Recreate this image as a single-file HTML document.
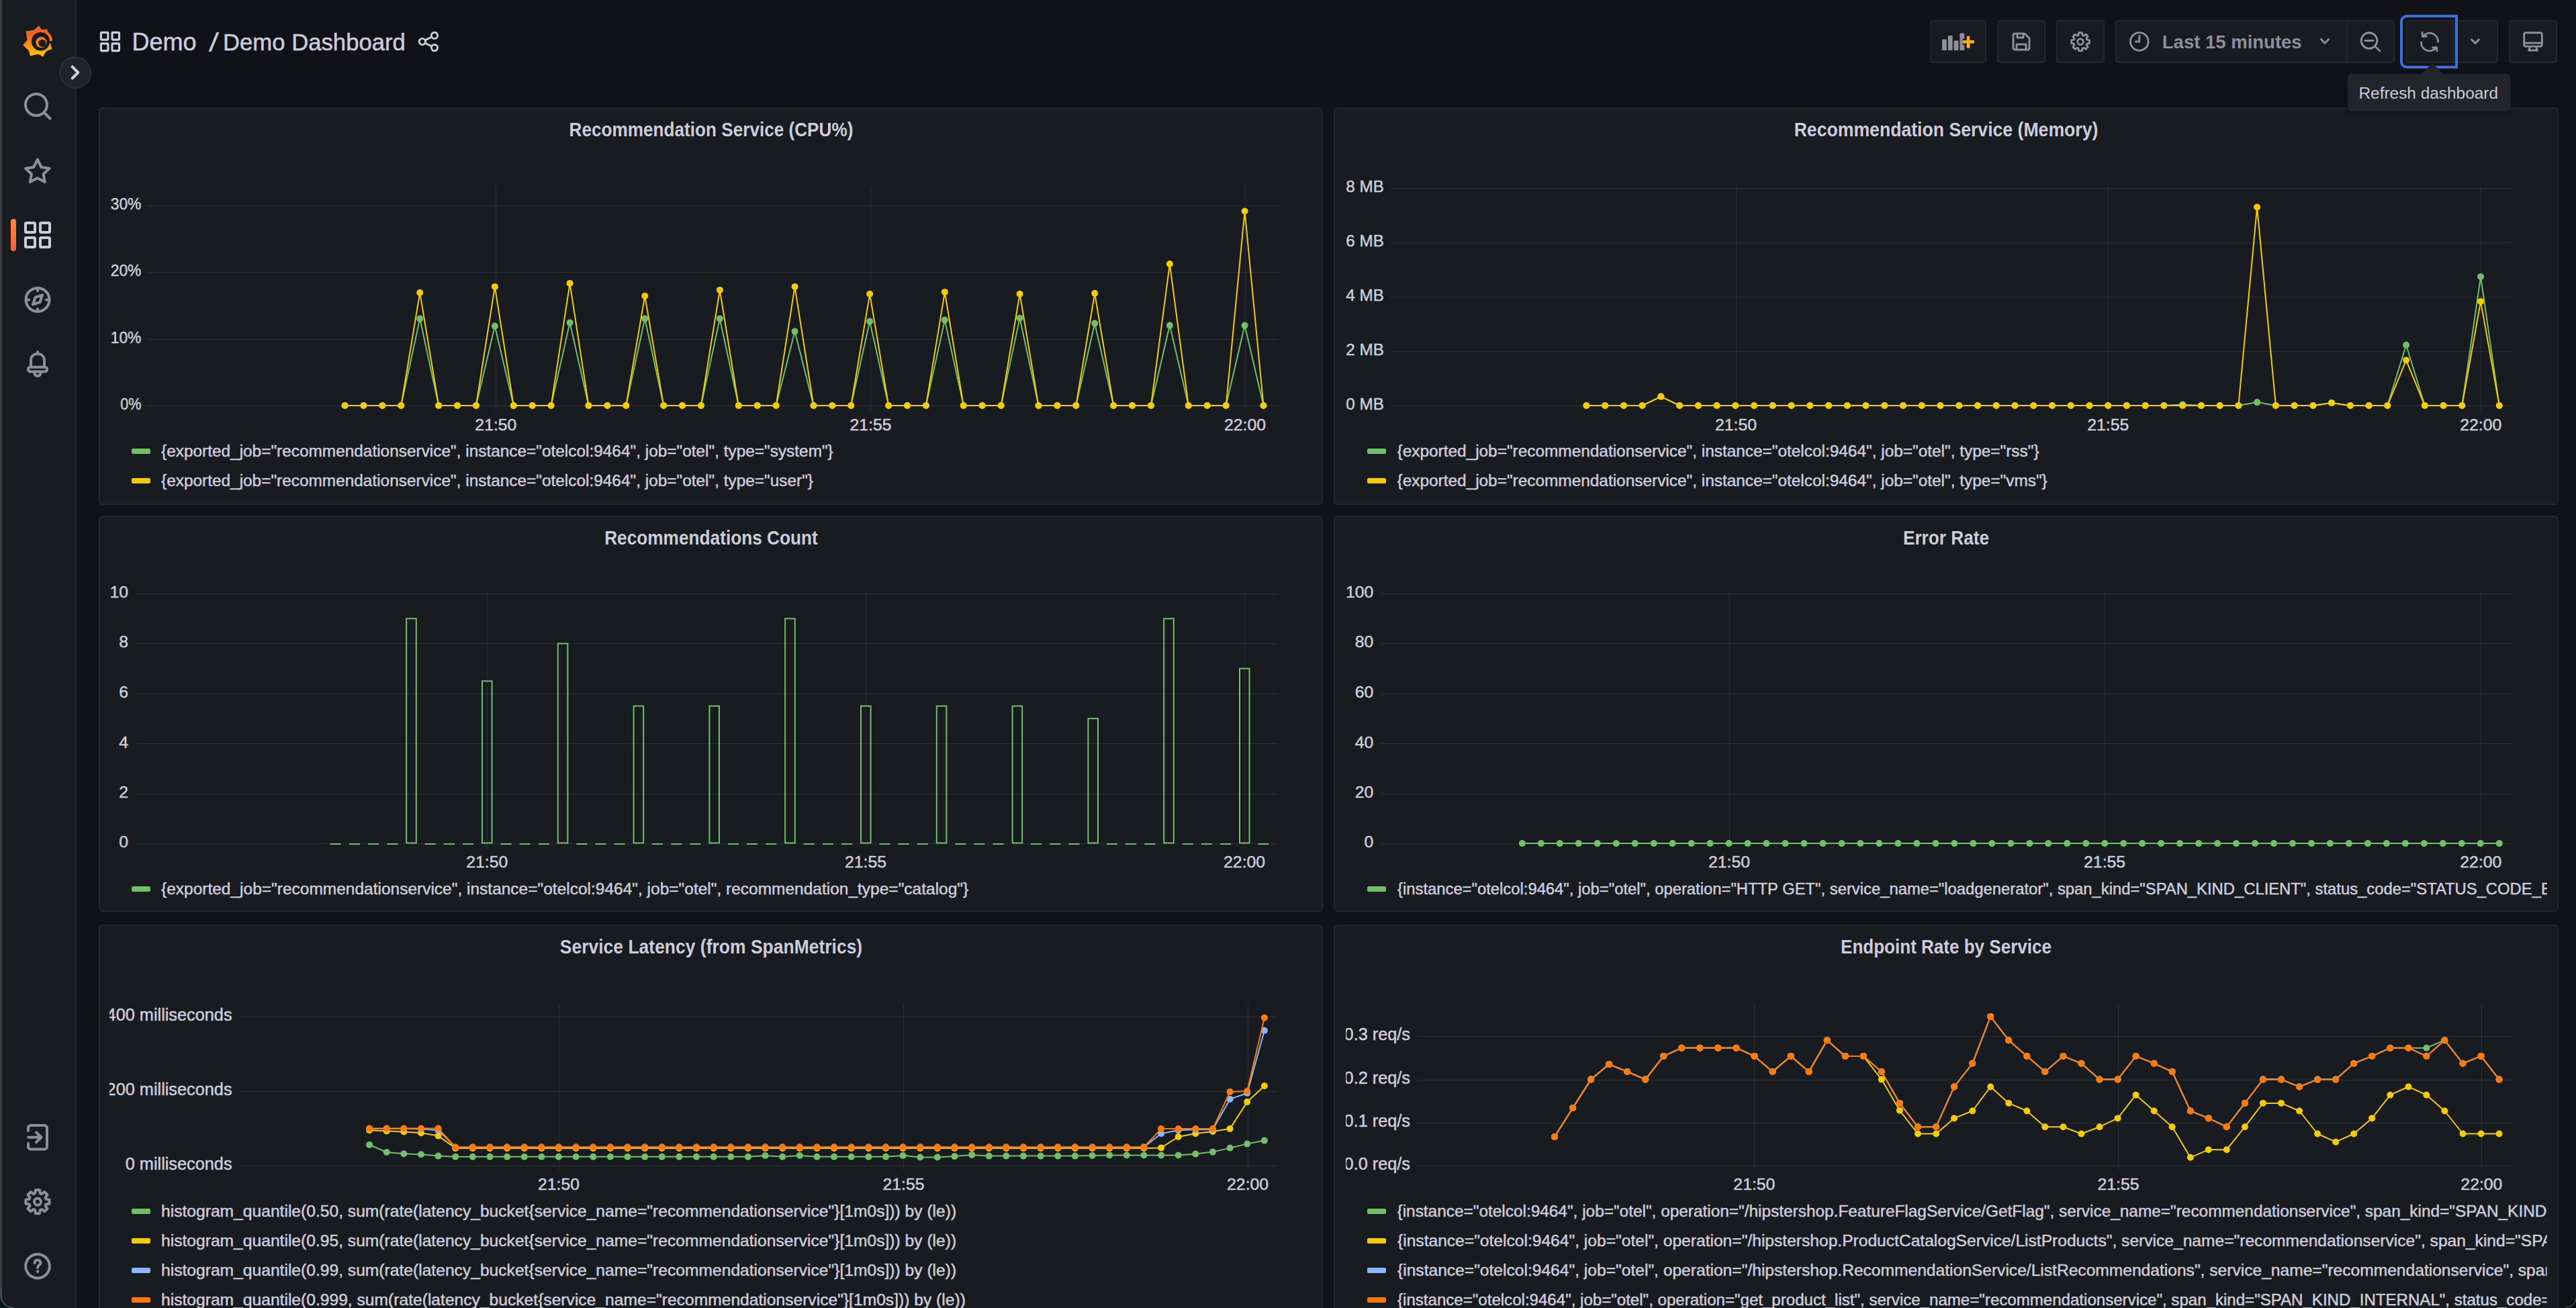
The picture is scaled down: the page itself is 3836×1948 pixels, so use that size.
<!DOCTYPE html>
<html><head><meta charset="utf-8"><style>
html,body{margin:0;padding:0}
body{width:3836px;height:1948px;background:#111217;position:relative;overflow:hidden;font-family:'Liberation Sans', sans-serif}
.pn{position:absolute;box-sizing:border-box;background:#181b1f;border:2px solid #25272c;border-radius:6px}
.tt{position:absolute;width:1200px;text-align:center;font-weight:bold;font-size:29.6px;line-height:32px;color:#ccccdc;white-space:nowrap}
.ax{font-size:24.8px;fill:#ccccdc;font-family:'Liberation Sans', sans-serif;stroke:#ccccdc;stroke-width:0.5px}
.g{stroke:rgba(240,250,255,0.088);stroke-width:1;shape-rendering:crispEdges}
.lm{position:absolute;width:28px;height:8px;border-radius:2px}
.lt{position:absolute;font-size:24.4px;line-height:30px;color:#ccccdc;white-space:nowrap;overflow:hidden;-webkit-text-stroke:0.5px #ccccdc}
</style></head><body>
<div style="position:absolute;left:0;top:0;width:112px;height:1948px;background:#181b1f;border-right:2px solid #25272c;box-sizing:content-box"></div>
<div style="position:absolute;left:0;top:0;width:2.5px;height:1948px;background:#3a3b3f"></div>
<div style="position:absolute;left:196.4px;top:41px;font-size:36px;line-height:44px;color:#ccccdc;white-space:nowrap;-webkit-text-stroke:0.5px #ccccdc">Demo</div>
<div style="position:absolute;left:312.5px;top:41px;font-size:38px;line-height:44px;color:#ccccdc;white-space:nowrap;transform:skewX(-8deg);-webkit-text-stroke:0.8px #ccccdc">/</div>
<div style="position:absolute;left:332px;top:41px;font-size:34.7px;line-height:44px;color:#ccccdc;white-space:nowrap;-webkit-text-stroke:0.5px #ccccdc">Demo Dashboard</div>
<div class="pn" style="left:147px;top:160px;width:1823px;height:592px"></div><div class="tt" style="left:458.5px;top:177.1px;transform:scaleX(0.8835)">Recommendation Service (CPU%)</div><div class="pn" style="left:1986px;top:160px;width:1823.5px;height:592px"></div><div class="tt" style="left:2297.8px;top:177.1px;transform:scaleX(0.8996)">Recommendation Service (Memory)</div><div class="pn" style="left:147px;top:768px;width:1823px;height:590px"></div><div class="tt" style="left:458.5px;top:785.1px;transform:scaleX(0.8864)">Recommendations Count</div><div class="pn" style="left:1986px;top:768px;width:1823.5px;height:590px"></div><div class="tt" style="left:2297.8px;top:785.1px;transform:scaleX(0.8854)">Error Rate</div><div class="pn" style="left:147px;top:1376.5px;width:1823px;height:700px"></div><div class="tt" style="left:458.5px;top:1393.6px;transform:scaleX(0.8949)">Service Latency (from SpanMetrics)</div><div class="pn" style="left:1986px;top:1376.5px;width:1823.5px;height:700px"></div><div class="tt" style="left:2297.8px;top:1393.6px;transform:scaleX(0.8797)">Endpoint Rate by Service</div>
<svg style="position:absolute;left:0;top:0" width="3836" height="1948" viewBox="0 0 3836 1948">
<defs><clipPath id="c5"><rect x="163" y="1480" width="400" height="300"/></clipPath></defs>
<text x="210.4" y="311.8" text-anchor="end" class="ax" transform="translate(210.4,0) scale(0.92,1) translate(-210.4,0)">30%</text><text x="210.4" y="410.8" text-anchor="end" class="ax" transform="translate(210.4,0) scale(0.92,1) translate(-210.4,0)">20%</text><text x="210.4" y="510.8" text-anchor="end" class="ax" transform="translate(210.4,0) scale(0.92,1) translate(-210.4,0)">10%</text><text x="210.4" y="609.8" text-anchor="end" class="ax" transform="translate(210.4,0) scale(0.87,1) translate(-210.4,0)">0%</text><line x1="220" y1="306.5" x2="1902.5" y2="306.5" class="g"/><line x1="220" y1="405.5" x2="1902.5" y2="405.5" class="g"/><line x1="220" y1="505.5" x2="1902.5" y2="505.5" class="g"/><line x1="220" y1="604.5" x2="1902.5" y2="604.5" class="g"/><line x1="738.5" y1="277" x2="738.5" y2="612" class="g"/><line x1="1296.5" y1="277" x2="1296.5" y2="612" class="g"/><line x1="1854.5" y1="277" x2="1854.5" y2="612" class="g"/><text x="738.4" y="640.5" text-anchor="middle" class="ax">21:50</text><text x="1296.6" y="640.5" text-anchor="middle" class="ax">21:55</text><text x="1854" y="640.5" text-anchor="middle" class="ax">22:00</text><polyline points="513.6,604 541.5,604 569.4,604 597.3,604 625.3,474.6 653.2,604 681.1,604 709,604 736.9,485.6 764.8,604 792.8,604 820.7,604 848.6,480.6 876.5,604 904.4,604 932.3,604 960.3,474.6 988.2,604 1016.1,604 1044,604 1071.9,474.6 1099.8,604 1127.8,604 1155.7,604 1183.6,493.6 1211.5,604 1239.4,604 1267.3,604 1295.2,478.6 1323.2,604 1351.1,604 1379,604 1406.9,476.6 1434.8,604 1462.7,604 1490.7,604 1518.6,473.7 1546.5,604 1574.4,604 1602.3,604 1630.2,481.6 1658.2,604 1686.1,604 1714,604 1741.9,484.6 1769.8,604 1797.7,604 1825.7,604 1853.6,484.6 1881.5,604" fill="none" stroke="#73BF69" stroke-width="2" stroke-linejoin="round"/><circle cx="513.6" cy="604" r="5" fill="#73BF69"/><circle cx="541.5" cy="604" r="5" fill="#73BF69"/><circle cx="569.4" cy="604" r="5" fill="#73BF69"/><circle cx="597.3" cy="604" r="5" fill="#73BF69"/><circle cx="625.3" cy="474.6" r="5" fill="#73BF69"/><circle cx="653.2" cy="604" r="5" fill="#73BF69"/><circle cx="681.1" cy="604" r="5" fill="#73BF69"/><circle cx="709" cy="604" r="5" fill="#73BF69"/><circle cx="736.9" cy="485.6" r="5" fill="#73BF69"/><circle cx="764.8" cy="604" r="5" fill="#73BF69"/><circle cx="792.8" cy="604" r="5" fill="#73BF69"/><circle cx="820.7" cy="604" r="5" fill="#73BF69"/><circle cx="848.6" cy="480.6" r="5" fill="#73BF69"/><circle cx="876.5" cy="604" r="5" fill="#73BF69"/><circle cx="904.4" cy="604" r="5" fill="#73BF69"/><circle cx="932.3" cy="604" r="5" fill="#73BF69"/><circle cx="960.3" cy="474.6" r="5" fill="#73BF69"/><circle cx="988.2" cy="604" r="5" fill="#73BF69"/><circle cx="1016.1" cy="604" r="5" fill="#73BF69"/><circle cx="1044" cy="604" r="5" fill="#73BF69"/><circle cx="1071.9" cy="474.6" r="5" fill="#73BF69"/><circle cx="1099.8" cy="604" r="5" fill="#73BF69"/><circle cx="1127.8" cy="604" r="5" fill="#73BF69"/><circle cx="1155.7" cy="604" r="5" fill="#73BF69"/><circle cx="1183.6" cy="493.6" r="5" fill="#73BF69"/><circle cx="1211.5" cy="604" r="5" fill="#73BF69"/><circle cx="1239.4" cy="604" r="5" fill="#73BF69"/><circle cx="1267.3" cy="604" r="5" fill="#73BF69"/><circle cx="1295.2" cy="478.6" r="5" fill="#73BF69"/><circle cx="1323.2" cy="604" r="5" fill="#73BF69"/><circle cx="1351.1" cy="604" r="5" fill="#73BF69"/><circle cx="1379" cy="604" r="5" fill="#73BF69"/><circle cx="1406.9" cy="476.6" r="5" fill="#73BF69"/><circle cx="1434.8" cy="604" r="5" fill="#73BF69"/><circle cx="1462.7" cy="604" r="5" fill="#73BF69"/><circle cx="1490.7" cy="604" r="5" fill="#73BF69"/><circle cx="1518.6" cy="473.7" r="5" fill="#73BF69"/><circle cx="1546.5" cy="604" r="5" fill="#73BF69"/><circle cx="1574.4" cy="604" r="5" fill="#73BF69"/><circle cx="1602.3" cy="604" r="5" fill="#73BF69"/><circle cx="1630.2" cy="481.6" r="5" fill="#73BF69"/><circle cx="1658.2" cy="604" r="5" fill="#73BF69"/><circle cx="1686.1" cy="604" r="5" fill="#73BF69"/><circle cx="1714" cy="604" r="5" fill="#73BF69"/><circle cx="1741.9" cy="484.6" r="5" fill="#73BF69"/><circle cx="1769.8" cy="604" r="5" fill="#73BF69"/><circle cx="1797.7" cy="604" r="5" fill="#73BF69"/><circle cx="1825.7" cy="604" r="5" fill="#73BF69"/><circle cx="1853.6" cy="484.6" r="5" fill="#73BF69"/><circle cx="1881.5" cy="604" r="5" fill="#73BF69"/><polyline points="513.6,604 541.5,604 569.4,604 597.3,604 625.3,435.8 653.2,604 681.1,604 709,604 736.9,426.9 764.8,604 792.8,604 820.7,604 848.6,421.9 876.5,604 904.4,604 932.3,604 960.3,440.8 988.2,604 1016.1,604 1044,604 1071.9,431.9 1099.8,604 1127.8,604 1155.7,604 1183.6,426.9 1211.5,604 1239.4,604 1267.3,604 1295.2,437.8 1323.2,604 1351.1,604 1379,604 1406.9,434.9 1434.8,604 1462.7,604 1490.7,604 1518.6,437.8 1546.5,604 1574.4,604 1602.3,604 1630.2,436.8 1658.2,604 1686.1,604 1714,604 1741.9,393.1 1769.8,604 1797.7,604 1825.7,604 1853.6,314.5 1881.5,604" fill="none" stroke="#F2CC0C" stroke-width="2" stroke-linejoin="round"/><circle cx="513.6" cy="604" r="5" fill="#F2CC0C"/><circle cx="541.5" cy="604" r="5" fill="#F2CC0C"/><circle cx="569.4" cy="604" r="5" fill="#F2CC0C"/><circle cx="597.3" cy="604" r="5" fill="#F2CC0C"/><circle cx="625.3" cy="435.8" r="5" fill="#F2CC0C"/><circle cx="653.2" cy="604" r="5" fill="#F2CC0C"/><circle cx="681.1" cy="604" r="5" fill="#F2CC0C"/><circle cx="709" cy="604" r="5" fill="#F2CC0C"/><circle cx="736.9" cy="426.9" r="5" fill="#F2CC0C"/><circle cx="764.8" cy="604" r="5" fill="#F2CC0C"/><circle cx="792.8" cy="604" r="5" fill="#F2CC0C"/><circle cx="820.7" cy="604" r="5" fill="#F2CC0C"/><circle cx="848.6" cy="421.9" r="5" fill="#F2CC0C"/><circle cx="876.5" cy="604" r="5" fill="#F2CC0C"/><circle cx="904.4" cy="604" r="5" fill="#F2CC0C"/><circle cx="932.3" cy="604" r="5" fill="#F2CC0C"/><circle cx="960.3" cy="440.8" r="5" fill="#F2CC0C"/><circle cx="988.2" cy="604" r="5" fill="#F2CC0C"/><circle cx="1016.1" cy="604" r="5" fill="#F2CC0C"/><circle cx="1044" cy="604" r="5" fill="#F2CC0C"/><circle cx="1071.9" cy="431.9" r="5" fill="#F2CC0C"/><circle cx="1099.8" cy="604" r="5" fill="#F2CC0C"/><circle cx="1127.8" cy="604" r="5" fill="#F2CC0C"/><circle cx="1155.7" cy="604" r="5" fill="#F2CC0C"/><circle cx="1183.6" cy="426.9" r="5" fill="#F2CC0C"/><circle cx="1211.5" cy="604" r="5" fill="#F2CC0C"/><circle cx="1239.4" cy="604" r="5" fill="#F2CC0C"/><circle cx="1267.3" cy="604" r="5" fill="#F2CC0C"/><circle cx="1295.2" cy="437.8" r="5" fill="#F2CC0C"/><circle cx="1323.2" cy="604" r="5" fill="#F2CC0C"/><circle cx="1351.1" cy="604" r="5" fill="#F2CC0C"/><circle cx="1379" cy="604" r="5" fill="#F2CC0C"/><circle cx="1406.9" cy="434.9" r="5" fill="#F2CC0C"/><circle cx="1434.8" cy="604" r="5" fill="#F2CC0C"/><circle cx="1462.7" cy="604" r="5" fill="#F2CC0C"/><circle cx="1490.7" cy="604" r="5" fill="#F2CC0C"/><circle cx="1518.6" cy="437.8" r="5" fill="#F2CC0C"/><circle cx="1546.5" cy="604" r="5" fill="#F2CC0C"/><circle cx="1574.4" cy="604" r="5" fill="#F2CC0C"/><circle cx="1602.3" cy="604" r="5" fill="#F2CC0C"/><circle cx="1630.2" cy="436.8" r="5" fill="#F2CC0C"/><circle cx="1658.2" cy="604" r="5" fill="#F2CC0C"/><circle cx="1686.1" cy="604" r="5" fill="#F2CC0C"/><circle cx="1714" cy="604" r="5" fill="#F2CC0C"/><circle cx="1741.9" cy="393.1" r="5" fill="#F2CC0C"/><circle cx="1769.8" cy="604" r="5" fill="#F2CC0C"/><circle cx="1797.7" cy="604" r="5" fill="#F2CC0C"/><circle cx="1825.7" cy="604" r="5" fill="#F2CC0C"/><circle cx="1853.6" cy="314.5" r="5" fill="#F2CC0C"/><circle cx="1881.5" cy="604" r="5" fill="#F2CC0C"/><text x="2060.8" y="285.8" text-anchor="end" class="ax" transform="translate(2060.8,0) scale(0.975,1) translate(-2060.8,0)">8 MB</text><text x="2060.8" y="366.8" text-anchor="end" class="ax" transform="translate(2060.8,0) scale(0.975,1) translate(-2060.8,0)">6 MB</text><text x="2060.8" y="447.8" text-anchor="end" class="ax" transform="translate(2060.8,0) scale(0.975,1) translate(-2060.8,0)">4 MB</text><text x="2060.8" y="528.8" text-anchor="end" class="ax" transform="translate(2060.8,0) scale(0.975,1) translate(-2060.8,0)">2 MB</text><text x="2060.8" y="609.8" text-anchor="end" class="ax" transform="translate(2060.8,0) scale(0.975,1) translate(-2060.8,0)">0 MB</text><line x1="2071" y1="280.5" x2="3742" y2="280.5" class="g"/><line x1="2071" y1="361.5" x2="3742" y2="361.5" class="g"/><line x1="2071" y1="442.5" x2="3742" y2="442.5" class="g"/><line x1="2071" y1="523.5" x2="3742" y2="523.5" class="g"/><line x1="2071" y1="604.5" x2="3742" y2="604.5" class="g"/><line x1="2585.5" y1="277" x2="2585.5" y2="612" class="g"/><line x1="3139.5" y1="277" x2="3139.5" y2="612" class="g"/><line x1="3694.5" y1="277" x2="3694.5" y2="612" class="g"/><text x="2585" y="640.5" text-anchor="middle" class="ax">21:50</text><text x="3139.2" y="640.5" text-anchor="middle" class="ax">21:55</text><text x="3694.2" y="640.5" text-anchor="middle" class="ax">22:00</text><polyline points="2362.4,604 2390.1,604 2417.9,604 2445.6,604 2473.4,590.6 2501.1,604 2528.9,604 2556.6,604 2584.3,604 2612.1,604 2639.8,604 2667.6,604 2695.3,604 2723.1,604 2750.8,604 2778.5,604 2806.3,604 2834,604 2861.8,604 2889.5,604 2917.3,604 2945,604 2972.7,604 3000.5,604 3028.2,604 3056,604 3083.7,604 3111.5,604 3139.2,604 3166.9,604 3194.7,604 3222.4,604 3250.2,602.4 3277.9,604 3305.7,604 3333.4,604 3361.1,599.1 3388.9,604 3416.6,604 3444.4,604 3472.1,600 3499.9,604 3527.6,604 3555.3,604 3583.1,513.7 3610.8,604 3638.6,604 3666.3,604 3694.1,412 3721.8,604" fill="none" stroke="#73BF69" stroke-width="2" stroke-linejoin="round"/><circle cx="2362.4" cy="604" r="5" fill="#73BF69"/><circle cx="2390.1" cy="604" r="5" fill="#73BF69"/><circle cx="2417.9" cy="604" r="5" fill="#73BF69"/><circle cx="2445.6" cy="604" r="5" fill="#73BF69"/><circle cx="2473.4" cy="590.6" r="5" fill="#73BF69"/><circle cx="2501.1" cy="604" r="5" fill="#73BF69"/><circle cx="2528.9" cy="604" r="5" fill="#73BF69"/><circle cx="2556.6" cy="604" r="5" fill="#73BF69"/><circle cx="2584.3" cy="604" r="5" fill="#73BF69"/><circle cx="2612.1" cy="604" r="5" fill="#73BF69"/><circle cx="2639.8" cy="604" r="5" fill="#73BF69"/><circle cx="2667.6" cy="604" r="5" fill="#73BF69"/><circle cx="2695.3" cy="604" r="5" fill="#73BF69"/><circle cx="2723.1" cy="604" r="5" fill="#73BF69"/><circle cx="2750.8" cy="604" r="5" fill="#73BF69"/><circle cx="2778.5" cy="604" r="5" fill="#73BF69"/><circle cx="2806.3" cy="604" r="5" fill="#73BF69"/><circle cx="2834" cy="604" r="5" fill="#73BF69"/><circle cx="2861.8" cy="604" r="5" fill="#73BF69"/><circle cx="2889.5" cy="604" r="5" fill="#73BF69"/><circle cx="2917.3" cy="604" r="5" fill="#73BF69"/><circle cx="2945" cy="604" r="5" fill="#73BF69"/><circle cx="2972.7" cy="604" r="5" fill="#73BF69"/><circle cx="3000.5" cy="604" r="5" fill="#73BF69"/><circle cx="3028.2" cy="604" r="5" fill="#73BF69"/><circle cx="3056" cy="604" r="5" fill="#73BF69"/><circle cx="3083.7" cy="604" r="5" fill="#73BF69"/><circle cx="3111.5" cy="604" r="5" fill="#73BF69"/><circle cx="3139.2" cy="604" r="5" fill="#73BF69"/><circle cx="3166.9" cy="604" r="5" fill="#73BF69"/><circle cx="3194.7" cy="604" r="5" fill="#73BF69"/><circle cx="3222.4" cy="604" r="5" fill="#73BF69"/><circle cx="3250.2" cy="602.4" r="5" fill="#73BF69"/><circle cx="3277.9" cy="604" r="5" fill="#73BF69"/><circle cx="3305.7" cy="604" r="5" fill="#73BF69"/><circle cx="3333.4" cy="604" r="5" fill="#73BF69"/><circle cx="3361.1" cy="599.1" r="5" fill="#73BF69"/><circle cx="3388.9" cy="604" r="5" fill="#73BF69"/><circle cx="3416.6" cy="604" r="5" fill="#73BF69"/><circle cx="3444.4" cy="604" r="5" fill="#73BF69"/><circle cx="3472.1" cy="600" r="5" fill="#73BF69"/><circle cx="3499.9" cy="604" r="5" fill="#73BF69"/><circle cx="3527.6" cy="604" r="5" fill="#73BF69"/><circle cx="3555.3" cy="604" r="5" fill="#73BF69"/><circle cx="3583.1" cy="513.7" r="5" fill="#73BF69"/><circle cx="3610.8" cy="604" r="5" fill="#73BF69"/><circle cx="3638.6" cy="604" r="5" fill="#73BF69"/><circle cx="3666.3" cy="604" r="5" fill="#73BF69"/><circle cx="3694.1" cy="412" r="5" fill="#73BF69"/><circle cx="3721.8" cy="604" r="5" fill="#73BF69"/><polyline points="2362.4,604 2390.1,604 2417.9,604 2445.6,604 2473.4,590.6 2501.1,604 2528.9,604 2556.6,604 2584.3,604 2612.1,604 2639.8,604 2667.6,604 2695.3,604 2723.1,604 2750.8,604 2778.5,604 2806.3,604 2834,604 2861.8,604 2889.5,604 2917.3,604 2945,604 2972.7,604 3000.5,604 3028.2,604 3056,604 3083.7,604 3111.5,604 3139.2,604 3166.9,604 3194.7,604 3222.4,604 3250.2,604 3277.9,604 3305.7,604 3333.4,604 3361.1,308.4 3388.9,604 3416.6,604 3444.4,604 3472.1,600 3499.9,604 3527.6,604 3555.3,604 3583.1,536.4 3610.8,604 3638.6,604 3666.3,604 3694.1,448.9 3721.8,604" fill="none" stroke="#F2CC0C" stroke-width="2" stroke-linejoin="round"/><circle cx="2362.4" cy="604" r="5" fill="#F2CC0C"/><circle cx="2390.1" cy="604" r="5" fill="#F2CC0C"/><circle cx="2417.9" cy="604" r="5" fill="#F2CC0C"/><circle cx="2445.6" cy="604" r="5" fill="#F2CC0C"/><circle cx="2473.4" cy="590.6" r="5" fill="#F2CC0C"/><circle cx="2501.1" cy="604" r="5" fill="#F2CC0C"/><circle cx="2528.9" cy="604" r="5" fill="#F2CC0C"/><circle cx="2556.6" cy="604" r="5" fill="#F2CC0C"/><circle cx="2584.3" cy="604" r="5" fill="#F2CC0C"/><circle cx="2612.1" cy="604" r="5" fill="#F2CC0C"/><circle cx="2639.8" cy="604" r="5" fill="#F2CC0C"/><circle cx="2667.6" cy="604" r="5" fill="#F2CC0C"/><circle cx="2695.3" cy="604" r="5" fill="#F2CC0C"/><circle cx="2723.1" cy="604" r="5" fill="#F2CC0C"/><circle cx="2750.8" cy="604" r="5" fill="#F2CC0C"/><circle cx="2778.5" cy="604" r="5" fill="#F2CC0C"/><circle cx="2806.3" cy="604" r="5" fill="#F2CC0C"/><circle cx="2834" cy="604" r="5" fill="#F2CC0C"/><circle cx="2861.8" cy="604" r="5" fill="#F2CC0C"/><circle cx="2889.5" cy="604" r="5" fill="#F2CC0C"/><circle cx="2917.3" cy="604" r="5" fill="#F2CC0C"/><circle cx="2945" cy="604" r="5" fill="#F2CC0C"/><circle cx="2972.7" cy="604" r="5" fill="#F2CC0C"/><circle cx="3000.5" cy="604" r="5" fill="#F2CC0C"/><circle cx="3028.2" cy="604" r="5" fill="#F2CC0C"/><circle cx="3056" cy="604" r="5" fill="#F2CC0C"/><circle cx="3083.7" cy="604" r="5" fill="#F2CC0C"/><circle cx="3111.5" cy="604" r="5" fill="#F2CC0C"/><circle cx="3139.2" cy="604" r="5" fill="#F2CC0C"/><circle cx="3166.9" cy="604" r="5" fill="#F2CC0C"/><circle cx="3194.7" cy="604" r="5" fill="#F2CC0C"/><circle cx="3222.4" cy="604" r="5" fill="#F2CC0C"/><circle cx="3250.2" cy="604" r="5" fill="#F2CC0C"/><circle cx="3277.9" cy="604" r="5" fill="#F2CC0C"/><circle cx="3305.7" cy="604" r="5" fill="#F2CC0C"/><circle cx="3333.4" cy="604" r="5" fill="#F2CC0C"/><circle cx="3361.1" cy="308.4" r="5" fill="#F2CC0C"/><circle cx="3388.9" cy="604" r="5" fill="#F2CC0C"/><circle cx="3416.6" cy="604" r="5" fill="#F2CC0C"/><circle cx="3444.4" cy="604" r="5" fill="#F2CC0C"/><circle cx="3472.1" cy="600" r="5" fill="#F2CC0C"/><circle cx="3499.9" cy="604" r="5" fill="#F2CC0C"/><circle cx="3527.6" cy="604" r="5" fill="#F2CC0C"/><circle cx="3555.3" cy="604" r="5" fill="#F2CC0C"/><circle cx="3583.1" cy="536.4" r="5" fill="#F2CC0C"/><circle cx="3610.8" cy="604" r="5" fill="#F2CC0C"/><circle cx="3638.6" cy="604" r="5" fill="#F2CC0C"/><circle cx="3666.3" cy="604" r="5" fill="#F2CC0C"/><circle cx="3694.1" cy="448.9" r="5" fill="#F2CC0C"/><circle cx="3721.8" cy="604" r="5" fill="#F2CC0C"/><text x="191" y="889.8" text-anchor="end" class="ax">10</text><text x="191" y="964.3" text-anchor="end" class="ax">8</text><text x="191" y="1039" text-anchor="end" class="ax">6</text><text x="191" y="1113.7" text-anchor="end" class="ax">4</text><text x="191" y="1188.1" text-anchor="end" class="ax">2</text><text x="191" y="1261.9" text-anchor="end" class="ax">0</text><line x1="201.5" y1="884.5" x2="1902" y2="884.5" class="g"/><line x1="201.5" y1="958.5" x2="1902" y2="958.5" class="g"/><line x1="201.5" y1="1033.5" x2="1902" y2="1033.5" class="g"/><line x1="201.5" y1="1107.5" x2="1902" y2="1107.5" class="g"/><line x1="201.5" y1="1182.5" x2="1902" y2="1182.5" class="g"/><line x1="201.5" y1="1256.5" x2="1902" y2="1256.5" class="g"/><line x1="725.5" y1="884" x2="725.5" y2="1263.6" class="g"/><line x1="1289.5" y1="884" x2="1289.5" y2="1263.6" class="g"/><line x1="1853.5" y1="884" x2="1853.5" y2="1263.6" class="g"/><text x="725.2" y="1292.1" text-anchor="middle" class="ax">21:50</text><text x="1289" y="1292.1" text-anchor="middle" class="ax">21:55</text><text x="1853.1" y="1292.1" text-anchor="middle" class="ax">22:00</text><line x1="491.7" y1="1257" x2="507.7" y2="1257" stroke="#73BF69" stroke-width="2"/><line x1="519.9" y1="1257" x2="535.9" y2="1257" stroke="#73BF69" stroke-width="2"/><line x1="548.1" y1="1257" x2="564.1" y2="1257" stroke="#73BF69" stroke-width="2"/><line x1="576.3" y1="1257" x2="592.3" y2="1257" stroke="#73BF69" stroke-width="2"/><rect x="605.2" y="921.3" width="14.6" height="334.2" fill="none" stroke="#73BF69" stroke-width="2"/><line x1="632.7" y1="1257" x2="648.7" y2="1257" stroke="#73BF69" stroke-width="2"/><line x1="660.9" y1="1257" x2="676.9" y2="1257" stroke="#73BF69" stroke-width="2"/><line x1="689.1" y1="1257" x2="705.1" y2="1257" stroke="#73BF69" stroke-width="2"/><rect x="718" y="1014.3" width="14.6" height="241.2" fill="none" stroke="#73BF69" stroke-width="2"/><line x1="745.5" y1="1257" x2="761.5" y2="1257" stroke="#73BF69" stroke-width="2"/><line x1="773.7" y1="1257" x2="789.7" y2="1257" stroke="#73BF69" stroke-width="2"/><line x1="801.9" y1="1257" x2="817.9" y2="1257" stroke="#73BF69" stroke-width="2"/><rect x="830.8" y="958.5" width="14.6" height="297" fill="none" stroke="#73BF69" stroke-width="2"/><line x1="858.3" y1="1257" x2="874.3" y2="1257" stroke="#73BF69" stroke-width="2"/><line x1="886.5" y1="1257" x2="902.5" y2="1257" stroke="#73BF69" stroke-width="2"/><line x1="914.7" y1="1257" x2="930.7" y2="1257" stroke="#73BF69" stroke-width="2"/><rect x="943.6" y="1051.5" width="14.6" height="204" fill="none" stroke="#73BF69" stroke-width="2"/><line x1="971.1" y1="1257" x2="987.1" y2="1257" stroke="#73BF69" stroke-width="2"/><line x1="999.3" y1="1257" x2="1015.3" y2="1257" stroke="#73BF69" stroke-width="2"/><line x1="1027.5" y1="1257" x2="1043.5" y2="1257" stroke="#73BF69" stroke-width="2"/><rect x="1056.4" y="1051.5" width="14.6" height="204" fill="none" stroke="#73BF69" stroke-width="2"/><line x1="1083.9" y1="1257" x2="1099.9" y2="1257" stroke="#73BF69" stroke-width="2"/><line x1="1112.1" y1="1257" x2="1128.1" y2="1257" stroke="#73BF69" stroke-width="2"/><line x1="1140.3" y1="1257" x2="1156.3" y2="1257" stroke="#73BF69" stroke-width="2"/><rect x="1169.2" y="921.3" width="14.6" height="334.2" fill="none" stroke="#73BF69" stroke-width="2"/><line x1="1196.7" y1="1257" x2="1212.7" y2="1257" stroke="#73BF69" stroke-width="2"/><line x1="1224.9" y1="1257" x2="1240.9" y2="1257" stroke="#73BF69" stroke-width="2"/><line x1="1253.1" y1="1257" x2="1269.1" y2="1257" stroke="#73BF69" stroke-width="2"/><rect x="1282" y="1051.5" width="14.6" height="204" fill="none" stroke="#73BF69" stroke-width="2"/><line x1="1309.5" y1="1257" x2="1325.5" y2="1257" stroke="#73BF69" stroke-width="2"/><line x1="1337.7" y1="1257" x2="1353.7" y2="1257" stroke="#73BF69" stroke-width="2"/><line x1="1365.9" y1="1257" x2="1381.9" y2="1257" stroke="#73BF69" stroke-width="2"/><rect x="1394.8" y="1051.5" width="14.6" height="204" fill="none" stroke="#73BF69" stroke-width="2"/><line x1="1422.3" y1="1257" x2="1438.3" y2="1257" stroke="#73BF69" stroke-width="2"/><line x1="1450.5" y1="1257" x2="1466.5" y2="1257" stroke="#73BF69" stroke-width="2"/><line x1="1478.7" y1="1257" x2="1494.7" y2="1257" stroke="#73BF69" stroke-width="2"/><rect x="1507.6" y="1051.5" width="14.6" height="204" fill="none" stroke="#73BF69" stroke-width="2"/><line x1="1535.1" y1="1257" x2="1551.1" y2="1257" stroke="#73BF69" stroke-width="2"/><line x1="1563.3" y1="1257" x2="1579.3" y2="1257" stroke="#73BF69" stroke-width="2"/><line x1="1591.5" y1="1257" x2="1607.5" y2="1257" stroke="#73BF69" stroke-width="2"/><rect x="1620.4" y="1070.1" width="14.6" height="185.4" fill="none" stroke="#73BF69" stroke-width="2"/><line x1="1647.9" y1="1257" x2="1663.9" y2="1257" stroke="#73BF69" stroke-width="2"/><line x1="1676.1" y1="1257" x2="1692.1" y2="1257" stroke="#73BF69" stroke-width="2"/><line x1="1704.3" y1="1257" x2="1720.3" y2="1257" stroke="#73BF69" stroke-width="2"/><rect x="1733.2" y="921.3" width="14.6" height="334.2" fill="none" stroke="#73BF69" stroke-width="2"/><line x1="1760.7" y1="1257" x2="1776.7" y2="1257" stroke="#73BF69" stroke-width="2"/><line x1="1788.9" y1="1257" x2="1804.9" y2="1257" stroke="#73BF69" stroke-width="2"/><line x1="1817.1" y1="1257" x2="1833.1" y2="1257" stroke="#73BF69" stroke-width="2"/><rect x="1846" y="995.7" width="14.6" height="259.8" fill="none" stroke="#73BF69" stroke-width="2"/><line x1="1873.5" y1="1257" x2="1889.5" y2="1257" stroke="#73BF69" stroke-width="2"/><text x="2045.3" y="889.8" text-anchor="end" class="ax">100</text><text x="2045.3" y="964.3" text-anchor="end" class="ax">80</text><text x="2045.3" y="1039" text-anchor="end" class="ax">60</text><text x="2045.3" y="1113.7" text-anchor="end" class="ax">40</text><text x="2045.3" y="1188.1" text-anchor="end" class="ax">20</text><text x="2045.3" y="1261.9" text-anchor="end" class="ax">0</text><line x1="2056" y1="884.5" x2="3742.3" y2="884.5" class="g"/><line x1="2056" y1="958.5" x2="3742.3" y2="958.5" class="g"/><line x1="2056" y1="1033.5" x2="3742.3" y2="1033.5" class="g"/><line x1="2056" y1="1107.5" x2="3742.3" y2="1107.5" class="g"/><line x1="2056" y1="1182.5" x2="3742.3" y2="1182.5" class="g"/><line x1="2056" y1="1256.5" x2="3742.3" y2="1256.5" class="g"/><line x1="2575.5" y1="884" x2="2575.5" y2="1263.6" class="g"/><line x1="3134.5" y1="884" x2="3134.5" y2="1263.6" class="g"/><line x1="3694.5" y1="884" x2="3694.5" y2="1263.6" class="g"/><text x="2575" y="1292.1" text-anchor="middle" class="ax">21:50</text><text x="3134.1" y="1292.1" text-anchor="middle" class="ax">21:55</text><text x="3694.2" y="1292.1" text-anchor="middle" class="ax">22:00</text><polyline points="2266.8,1256.1 2294.8,1256.1 2322.8,1256.1 2350.7,1256.1 2378.7,1256.1 2406.7,1256.1 2434.7,1256.1 2462.7,1256.1 2490.6,1256.1 2518.6,1256.1 2546.6,1256.1 2574.6,1256.1 2602.6,1256.1 2630.5,1256.1 2658.5,1256.1 2686.5,1256.1 2714.5,1256.1 2742.5,1256.1 2770.4,1256.1 2798.4,1256.1 2826.4,1256.1 2854.4,1256.1 2882.4,1256.1 2910.3,1256.1 2938.3,1256.1 2966.3,1256.1 2994.3,1256.1 3022.3,1256.1 3050.2,1256.1 3078.2,1256.1 3106.2,1256.1 3134.2,1256.1 3162.2,1256.1 3190.1,1256.1 3218.1,1256.1 3246.1,1256.1 3274.1,1256.1 3302.1,1256.1 3330,1256.1 3358,1256.1 3386,1256.1 3414,1256.1 3442,1256.1 3469.9,1256.1 3497.9,1256.1 3525.9,1256.1 3553.9,1256.1 3581.9,1256.1 3609.8,1256.1 3637.8,1256.1 3665.8,1256.1 3693.8,1256.1 3721.8,1256.1" fill="none" stroke="#73BF69" stroke-width="2" stroke-linejoin="round"/><circle cx="2266.8" cy="1256.1" r="5" fill="#73BF69"/><circle cx="2294.8" cy="1256.1" r="5" fill="#73BF69"/><circle cx="2322.8" cy="1256.1" r="5" fill="#73BF69"/><circle cx="2350.7" cy="1256.1" r="5" fill="#73BF69"/><circle cx="2378.7" cy="1256.1" r="5" fill="#73BF69"/><circle cx="2406.7" cy="1256.1" r="5" fill="#73BF69"/><circle cx="2434.7" cy="1256.1" r="5" fill="#73BF69"/><circle cx="2462.7" cy="1256.1" r="5" fill="#73BF69"/><circle cx="2490.6" cy="1256.1" r="5" fill="#73BF69"/><circle cx="2518.6" cy="1256.1" r="5" fill="#73BF69"/><circle cx="2546.6" cy="1256.1" r="5" fill="#73BF69"/><circle cx="2574.6" cy="1256.1" r="5" fill="#73BF69"/><circle cx="2602.6" cy="1256.1" r="5" fill="#73BF69"/><circle cx="2630.5" cy="1256.1" r="5" fill="#73BF69"/><circle cx="2658.5" cy="1256.1" r="5" fill="#73BF69"/><circle cx="2686.5" cy="1256.1" r="5" fill="#73BF69"/><circle cx="2714.5" cy="1256.1" r="5" fill="#73BF69"/><circle cx="2742.5" cy="1256.1" r="5" fill="#73BF69"/><circle cx="2770.4" cy="1256.1" r="5" fill="#73BF69"/><circle cx="2798.4" cy="1256.1" r="5" fill="#73BF69"/><circle cx="2826.4" cy="1256.1" r="5" fill="#73BF69"/><circle cx="2854.4" cy="1256.1" r="5" fill="#73BF69"/><circle cx="2882.4" cy="1256.1" r="5" fill="#73BF69"/><circle cx="2910.3" cy="1256.1" r="5" fill="#73BF69"/><circle cx="2938.3" cy="1256.1" r="5" fill="#73BF69"/><circle cx="2966.3" cy="1256.1" r="5" fill="#73BF69"/><circle cx="2994.3" cy="1256.1" r="5" fill="#73BF69"/><circle cx="3022.3" cy="1256.1" r="5" fill="#73BF69"/><circle cx="3050.2" cy="1256.1" r="5" fill="#73BF69"/><circle cx="3078.2" cy="1256.1" r="5" fill="#73BF69"/><circle cx="3106.2" cy="1256.1" r="5" fill="#73BF69"/><circle cx="3134.2" cy="1256.1" r="5" fill="#73BF69"/><circle cx="3162.2" cy="1256.1" r="5" fill="#73BF69"/><circle cx="3190.1" cy="1256.1" r="5" fill="#73BF69"/><circle cx="3218.1" cy="1256.1" r="5" fill="#73BF69"/><circle cx="3246.1" cy="1256.1" r="5" fill="#73BF69"/><circle cx="3274.1" cy="1256.1" r="5" fill="#73BF69"/><circle cx="3302.1" cy="1256.1" r="5" fill="#73BF69"/><circle cx="3330" cy="1256.1" r="5" fill="#73BF69"/><circle cx="3358" cy="1256.1" r="5" fill="#73BF69"/><circle cx="3386" cy="1256.1" r="5" fill="#73BF69"/><circle cx="3414" cy="1256.1" r="5" fill="#73BF69"/><circle cx="3442" cy="1256.1" r="5" fill="#73BF69"/><circle cx="3469.9" cy="1256.1" r="5" fill="#73BF69"/><circle cx="3497.9" cy="1256.1" r="5" fill="#73BF69"/><circle cx="3525.9" cy="1256.1" r="5" fill="#73BF69"/><circle cx="3553.9" cy="1256.1" r="5" fill="#73BF69"/><circle cx="3581.9" cy="1256.1" r="5" fill="#73BF69"/><circle cx="3609.8" cy="1256.1" r="5" fill="#73BF69"/><circle cx="3637.8" cy="1256.1" r="5" fill="#73BF69"/><circle cx="3665.8" cy="1256.1" r="5" fill="#73BF69"/><circle cx="3693.8" cy="1256.1" r="5" fill="#73BF69"/><circle cx="3721.8" cy="1256.1" r="5" fill="#73BF69"/><line x1="356.5" y1="1514.5" x2="1902.2" y2="1514.5" class="g"/><line x1="356.5" y1="1625.5" x2="1902.2" y2="1625.5" class="g"/><line x1="356.5" y1="1736.5" x2="1902.2" y2="1736.5" class="g"/><line x1="832.5" y1="1493.7" x2="832.5" y2="1743.4" class="g"/><line x1="1345.5" y1="1493.7" x2="1345.5" y2="1743.4" class="g"/><line x1="1858.5" y1="1493.7" x2="1858.5" y2="1743.4" class="g"/><text x="832" y="1771.8" text-anchor="middle" class="ax">21:50</text><text x="1345.5" y="1771.8" text-anchor="middle" class="ax">21:55</text><text x="1858.1" y="1771.8" text-anchor="middle" class="ax">22:00</text><polyline points="550.1,1704.9 575.7,1716 601.4,1718.2 627,1719.3 652.6,1721.6 678.2,1722.7 703.9,1722.7 729.5,1722.7 755.1,1722.7 780.8,1722.7 806.4,1722.7 832,1722.7 857.7,1722.7 883.3,1722.7 908.9,1722.7 934.5,1722.7 960.2,1722.7 985.8,1722.7 1011.4,1722.7 1037.1,1722.7 1062.7,1722.7 1088.3,1722.7 1114,1722.7 1139.6,1721 1165.2,1722.7 1190.8,1721 1216.5,1722.7 1242.1,1722.7 1267.7,1722.7 1293.4,1722.7 1319,1722.7 1344.6,1721 1370.3,1723.5 1395.9,1723.5 1421.5,1722.1 1447.2,1719.9 1472.8,1721.6 1498.4,1721.6 1524,1721.6 1549.7,1721.6 1575.3,1721.6 1600.9,1721.6 1626.6,1721 1652.2,1720.5 1677.8,1720.5 1703.4,1720.5 1729.1,1720.5 1754.7,1720.5 1780.3,1718.6 1806,1715.6 1831.6,1709.6 1857.2,1703.6 1882.9,1698.6" fill="none" stroke="#73BF69" stroke-width="2" stroke-linejoin="round"/><circle cx="550.1" cy="1704.9" r="5" fill="#73BF69"/><circle cx="575.7" cy="1716" r="5" fill="#73BF69"/><circle cx="601.4" cy="1718.2" r="5" fill="#73BF69"/><circle cx="627" cy="1719.3" r="5" fill="#73BF69"/><circle cx="652.6" cy="1721.6" r="5" fill="#73BF69"/><circle cx="678.2" cy="1722.7" r="5" fill="#73BF69"/><circle cx="703.9" cy="1722.7" r="5" fill="#73BF69"/><circle cx="729.5" cy="1722.7" r="5" fill="#73BF69"/><circle cx="755.1" cy="1722.7" r="5" fill="#73BF69"/><circle cx="780.8" cy="1722.7" r="5" fill="#73BF69"/><circle cx="806.4" cy="1722.7" r="5" fill="#73BF69"/><circle cx="832" cy="1722.7" r="5" fill="#73BF69"/><circle cx="857.7" cy="1722.7" r="5" fill="#73BF69"/><circle cx="883.3" cy="1722.7" r="5" fill="#73BF69"/><circle cx="908.9" cy="1722.7" r="5" fill="#73BF69"/><circle cx="934.5" cy="1722.7" r="5" fill="#73BF69"/><circle cx="960.2" cy="1722.7" r="5" fill="#73BF69"/><circle cx="985.8" cy="1722.7" r="5" fill="#73BF69"/><circle cx="1011.4" cy="1722.7" r="5" fill="#73BF69"/><circle cx="1037.1" cy="1722.7" r="5" fill="#73BF69"/><circle cx="1062.7" cy="1722.7" r="5" fill="#73BF69"/><circle cx="1088.3" cy="1722.7" r="5" fill="#73BF69"/><circle cx="1114" cy="1722.7" r="5" fill="#73BF69"/><circle cx="1139.6" cy="1721" r="5" fill="#73BF69"/><circle cx="1165.2" cy="1722.7" r="5" fill="#73BF69"/><circle cx="1190.8" cy="1721" r="5" fill="#73BF69"/><circle cx="1216.5" cy="1722.7" r="5" fill="#73BF69"/><circle cx="1242.1" cy="1722.7" r="5" fill="#73BF69"/><circle cx="1267.7" cy="1722.7" r="5" fill="#73BF69"/><circle cx="1293.4" cy="1722.7" r="5" fill="#73BF69"/><circle cx="1319" cy="1722.7" r="5" fill="#73BF69"/><circle cx="1344.6" cy="1721" r="5" fill="#73BF69"/><circle cx="1370.3" cy="1723.5" r="5" fill="#73BF69"/><circle cx="1395.9" cy="1723.5" r="5" fill="#73BF69"/><circle cx="1421.5" cy="1722.1" r="5" fill="#73BF69"/><circle cx="1447.2" cy="1719.9" r="5" fill="#73BF69"/><circle cx="1472.8" cy="1721.6" r="5" fill="#73BF69"/><circle cx="1498.4" cy="1721.6" r="5" fill="#73BF69"/><circle cx="1524" cy="1721.6" r="5" fill="#73BF69"/><circle cx="1549.7" cy="1721.6" r="5" fill="#73BF69"/><circle cx="1575.3" cy="1721.6" r="5" fill="#73BF69"/><circle cx="1600.9" cy="1721.6" r="5" fill="#73BF69"/><circle cx="1626.6" cy="1721" r="5" fill="#73BF69"/><circle cx="1652.2" cy="1720.5" r="5" fill="#73BF69"/><circle cx="1677.8" cy="1720.5" r="5" fill="#73BF69"/><circle cx="1703.4" cy="1720.5" r="5" fill="#73BF69"/><circle cx="1729.1" cy="1720.5" r="5" fill="#73BF69"/><circle cx="1754.7" cy="1720.5" r="5" fill="#73BF69"/><circle cx="1780.3" cy="1718.6" r="5" fill="#73BF69"/><circle cx="1806" cy="1715.6" r="5" fill="#73BF69"/><circle cx="1831.6" cy="1709.6" r="5" fill="#73BF69"/><circle cx="1857.2" cy="1703.6" r="5" fill="#73BF69"/><circle cx="1882.9" cy="1698.6" r="5" fill="#73BF69"/><polyline points="550.1,1683.3 575.7,1684.4 601.4,1685.5 627,1687.2 652.6,1691.6 678.2,1709.9 703.9,1709.9 729.5,1709.9 755.1,1709.9 780.8,1709.9 806.4,1709.9 832,1709.9 857.7,1709.9 883.3,1709.9 908.9,1709.9 934.5,1709.9 960.2,1709.9 985.8,1709.9 1011.4,1709.9 1037.1,1709.9 1062.7,1709.9 1088.3,1709.9 1114,1709.9 1139.6,1709.9 1165.2,1709.9 1190.8,1709.9 1216.5,1709.9 1242.1,1709.9 1267.7,1709.9 1293.4,1709.9 1319,1709.9 1344.6,1709.9 1370.3,1709.9 1395.9,1709.9 1421.5,1709.9 1447.2,1709.9 1472.8,1709.9 1498.4,1709.9 1524,1709.9 1549.7,1709.9 1575.3,1709.9 1600.9,1709.9 1626.6,1709.9 1652.2,1709.9 1677.8,1709.9 1703.4,1709.9 1729.1,1709.4 1754.7,1693 1780.3,1688.3 1806,1684.9 1831.6,1681.1 1857.2,1641.1 1882.9,1617.2" fill="none" stroke="#F2CC0C" stroke-width="2" stroke-linejoin="round"/><circle cx="550.1" cy="1683.3" r="5" fill="#F2CC0C"/><circle cx="575.7" cy="1684.4" r="5" fill="#F2CC0C"/><circle cx="601.4" cy="1685.5" r="5" fill="#F2CC0C"/><circle cx="627" cy="1687.2" r="5" fill="#F2CC0C"/><circle cx="652.6" cy="1691.6" r="5" fill="#F2CC0C"/><circle cx="678.2" cy="1709.9" r="5" fill="#F2CC0C"/><circle cx="703.9" cy="1709.9" r="5" fill="#F2CC0C"/><circle cx="729.5" cy="1709.9" r="5" fill="#F2CC0C"/><circle cx="755.1" cy="1709.9" r="5" fill="#F2CC0C"/><circle cx="780.8" cy="1709.9" r="5" fill="#F2CC0C"/><circle cx="806.4" cy="1709.9" r="5" fill="#F2CC0C"/><circle cx="832" cy="1709.9" r="5" fill="#F2CC0C"/><circle cx="857.7" cy="1709.9" r="5" fill="#F2CC0C"/><circle cx="883.3" cy="1709.9" r="5" fill="#F2CC0C"/><circle cx="908.9" cy="1709.9" r="5" fill="#F2CC0C"/><circle cx="934.5" cy="1709.9" r="5" fill="#F2CC0C"/><circle cx="960.2" cy="1709.9" r="5" fill="#F2CC0C"/><circle cx="985.8" cy="1709.9" r="5" fill="#F2CC0C"/><circle cx="1011.4" cy="1709.9" r="5" fill="#F2CC0C"/><circle cx="1037.1" cy="1709.9" r="5" fill="#F2CC0C"/><circle cx="1062.7" cy="1709.9" r="5" fill="#F2CC0C"/><circle cx="1088.3" cy="1709.9" r="5" fill="#F2CC0C"/><circle cx="1114" cy="1709.9" r="5" fill="#F2CC0C"/><circle cx="1139.6" cy="1709.9" r="5" fill="#F2CC0C"/><circle cx="1165.2" cy="1709.9" r="5" fill="#F2CC0C"/><circle cx="1190.8" cy="1709.9" r="5" fill="#F2CC0C"/><circle cx="1216.5" cy="1709.9" r="5" fill="#F2CC0C"/><circle cx="1242.1" cy="1709.9" r="5" fill="#F2CC0C"/><circle cx="1267.7" cy="1709.9" r="5" fill="#F2CC0C"/><circle cx="1293.4" cy="1709.9" r="5" fill="#F2CC0C"/><circle cx="1319" cy="1709.9" r="5" fill="#F2CC0C"/><circle cx="1344.6" cy="1709.9" r="5" fill="#F2CC0C"/><circle cx="1370.3" cy="1709.9" r="5" fill="#F2CC0C"/><circle cx="1395.9" cy="1709.9" r="5" fill="#F2CC0C"/><circle cx="1421.5" cy="1709.9" r="5" fill="#F2CC0C"/><circle cx="1447.2" cy="1709.9" r="5" fill="#F2CC0C"/><circle cx="1472.8" cy="1709.9" r="5" fill="#F2CC0C"/><circle cx="1498.4" cy="1709.9" r="5" fill="#F2CC0C"/><circle cx="1524" cy="1709.9" r="5" fill="#F2CC0C"/><circle cx="1549.7" cy="1709.9" r="5" fill="#F2CC0C"/><circle cx="1575.3" cy="1709.9" r="5" fill="#F2CC0C"/><circle cx="1600.9" cy="1709.9" r="5" fill="#F2CC0C"/><circle cx="1626.6" cy="1709.9" r="5" fill="#F2CC0C"/><circle cx="1652.2" cy="1709.9" r="5" fill="#F2CC0C"/><circle cx="1677.8" cy="1709.9" r="5" fill="#F2CC0C"/><circle cx="1703.4" cy="1709.9" r="5" fill="#F2CC0C"/><circle cx="1729.1" cy="1709.4" r="5" fill="#F2CC0C"/><circle cx="1754.7" cy="1693" r="5" fill="#F2CC0C"/><circle cx="1780.3" cy="1688.3" r="5" fill="#F2CC0C"/><circle cx="1806" cy="1684.9" r="5" fill="#F2CC0C"/><circle cx="1831.6" cy="1681.1" r="5" fill="#F2CC0C"/><circle cx="1857.2" cy="1641.1" r="5" fill="#F2CC0C"/><circle cx="1882.9" cy="1617.2" r="5" fill="#F2CC0C"/><polyline points="550.1,1681.1 575.7,1681.1 601.4,1681.1 627,1681.6 652.6,1683.3 678.2,1708.5 703.9,1708.5 729.5,1708.5 755.1,1708.5 780.8,1708.5 806.4,1708.5 832,1708.5 857.7,1708.5 883.3,1708.5 908.9,1708.5 934.5,1708.5 960.2,1708.5 985.8,1708.5 1011.4,1708.5 1037.1,1708.5 1062.7,1708.5 1088.3,1708.5 1114,1708.5 1139.6,1708.5 1165.2,1708.5 1190.8,1708.5 1216.5,1708.5 1242.1,1708.5 1267.7,1708.5 1293.4,1708.5 1319,1708.5 1344.6,1708.5 1370.3,1708.5 1395.9,1708.5 1421.5,1708.5 1447.2,1708.5 1472.8,1708.5 1498.4,1708.5 1524,1708.5 1549.7,1708.5 1575.3,1708.5 1600.9,1708.5 1626.6,1708.5 1652.2,1708.5 1677.8,1708.5 1703.4,1708.5 1729.1,1688.3 1754.7,1683.3 1780.3,1682.2 1806,1682.2 1831.6,1636.9 1857.2,1628 1882.9,1534.8" fill="none" stroke="#8AB8FF" stroke-width="2" stroke-linejoin="round"/><circle cx="550.1" cy="1681.1" r="5" fill="#8AB8FF"/><circle cx="575.7" cy="1681.1" r="5" fill="#8AB8FF"/><circle cx="601.4" cy="1681.1" r="5" fill="#8AB8FF"/><circle cx="627" cy="1681.6" r="5" fill="#8AB8FF"/><circle cx="652.6" cy="1683.3" r="5" fill="#8AB8FF"/><circle cx="678.2" cy="1708.5" r="5" fill="#8AB8FF"/><circle cx="703.9" cy="1708.5" r="5" fill="#8AB8FF"/><circle cx="729.5" cy="1708.5" r="5" fill="#8AB8FF"/><circle cx="755.1" cy="1708.5" r="5" fill="#8AB8FF"/><circle cx="780.8" cy="1708.5" r="5" fill="#8AB8FF"/><circle cx="806.4" cy="1708.5" r="5" fill="#8AB8FF"/><circle cx="832" cy="1708.5" r="5" fill="#8AB8FF"/><circle cx="857.7" cy="1708.5" r="5" fill="#8AB8FF"/><circle cx="883.3" cy="1708.5" r="5" fill="#8AB8FF"/><circle cx="908.9" cy="1708.5" r="5" fill="#8AB8FF"/><circle cx="934.5" cy="1708.5" r="5" fill="#8AB8FF"/><circle cx="960.2" cy="1708.5" r="5" fill="#8AB8FF"/><circle cx="985.8" cy="1708.5" r="5" fill="#8AB8FF"/><circle cx="1011.4" cy="1708.5" r="5" fill="#8AB8FF"/><circle cx="1037.1" cy="1708.5" r="5" fill="#8AB8FF"/><circle cx="1062.7" cy="1708.5" r="5" fill="#8AB8FF"/><circle cx="1088.3" cy="1708.5" r="5" fill="#8AB8FF"/><circle cx="1114" cy="1708.5" r="5" fill="#8AB8FF"/><circle cx="1139.6" cy="1708.5" r="5" fill="#8AB8FF"/><circle cx="1165.2" cy="1708.5" r="5" fill="#8AB8FF"/><circle cx="1190.8" cy="1708.5" r="5" fill="#8AB8FF"/><circle cx="1216.5" cy="1708.5" r="5" fill="#8AB8FF"/><circle cx="1242.1" cy="1708.5" r="5" fill="#8AB8FF"/><circle cx="1267.7" cy="1708.5" r="5" fill="#8AB8FF"/><circle cx="1293.4" cy="1708.5" r="5" fill="#8AB8FF"/><circle cx="1319" cy="1708.5" r="5" fill="#8AB8FF"/><circle cx="1344.6" cy="1708.5" r="5" fill="#8AB8FF"/><circle cx="1370.3" cy="1708.5" r="5" fill="#8AB8FF"/><circle cx="1395.9" cy="1708.5" r="5" fill="#8AB8FF"/><circle cx="1421.5" cy="1708.5" r="5" fill="#8AB8FF"/><circle cx="1447.2" cy="1708.5" r="5" fill="#8AB8FF"/><circle cx="1472.8" cy="1708.5" r="5" fill="#8AB8FF"/><circle cx="1498.4" cy="1708.5" r="5" fill="#8AB8FF"/><circle cx="1524" cy="1708.5" r="5" fill="#8AB8FF"/><circle cx="1549.7" cy="1708.5" r="5" fill="#8AB8FF"/><circle cx="1575.3" cy="1708.5" r="5" fill="#8AB8FF"/><circle cx="1600.9" cy="1708.5" r="5" fill="#8AB8FF"/><circle cx="1626.6" cy="1708.5" r="5" fill="#8AB8FF"/><circle cx="1652.2" cy="1708.5" r="5" fill="#8AB8FF"/><circle cx="1677.8" cy="1708.5" r="5" fill="#8AB8FF"/><circle cx="1703.4" cy="1708.5" r="5" fill="#8AB8FF"/><circle cx="1729.1" cy="1688.3" r="5" fill="#8AB8FF"/><circle cx="1754.7" cy="1683.3" r="5" fill="#8AB8FF"/><circle cx="1780.3" cy="1682.2" r="5" fill="#8AB8FF"/><circle cx="1806" cy="1682.2" r="5" fill="#8AB8FF"/><circle cx="1831.6" cy="1636.9" r="5" fill="#8AB8FF"/><circle cx="1857.2" cy="1628" r="5" fill="#8AB8FF"/><circle cx="1882.9" cy="1534.8" r="5" fill="#8AB8FF"/><polyline points="550.1,1680.5 575.7,1680.5 601.4,1680.5 627,1680.5 652.6,1680.5 678.2,1708.5 703.9,1708.5 729.5,1708.5 755.1,1708.5 780.8,1708.5 806.4,1708.5 832,1708.5 857.7,1708.5 883.3,1708.5 908.9,1708.5 934.5,1708.5 960.2,1708.5 985.8,1708.5 1011.4,1708.5 1037.1,1708.5 1062.7,1708.5 1088.3,1708.5 1114,1708.5 1139.6,1708.5 1165.2,1708.5 1190.8,1708.5 1216.5,1708.5 1242.1,1708.5 1267.7,1708.5 1293.4,1708.5 1319,1708.5 1344.6,1708.5 1370.3,1708.5 1395.9,1708.5 1421.5,1708.5 1447.2,1708.5 1472.8,1708.5 1498.4,1708.5 1524,1708.5 1549.7,1708.5 1575.3,1708.5 1600.9,1708.5 1626.6,1708.5 1652.2,1708.5 1677.8,1708.5 1703.4,1708.5 1729.1,1681.1 1754.7,1681.1 1780.3,1681.1 1806,1681.1 1831.6,1626.1 1857.2,1625 1882.9,1515.8" fill="none" stroke="#FF780A" stroke-width="2" stroke-linejoin="round"/><circle cx="550.1" cy="1680.5" r="5" fill="#FF780A"/><circle cx="575.7" cy="1680.5" r="5" fill="#FF780A"/><circle cx="601.4" cy="1680.5" r="5" fill="#FF780A"/><circle cx="627" cy="1680.5" r="5" fill="#FF780A"/><circle cx="652.6" cy="1680.5" r="5" fill="#FF780A"/><circle cx="678.2" cy="1708.5" r="5" fill="#FF780A"/><circle cx="703.9" cy="1708.5" r="5" fill="#FF780A"/><circle cx="729.5" cy="1708.5" r="5" fill="#FF780A"/><circle cx="755.1" cy="1708.5" r="5" fill="#FF780A"/><circle cx="780.8" cy="1708.5" r="5" fill="#FF780A"/><circle cx="806.4" cy="1708.5" r="5" fill="#FF780A"/><circle cx="832" cy="1708.5" r="5" fill="#FF780A"/><circle cx="857.7" cy="1708.5" r="5" fill="#FF780A"/><circle cx="883.3" cy="1708.5" r="5" fill="#FF780A"/><circle cx="908.9" cy="1708.5" r="5" fill="#FF780A"/><circle cx="934.5" cy="1708.5" r="5" fill="#FF780A"/><circle cx="960.2" cy="1708.5" r="5" fill="#FF780A"/><circle cx="985.8" cy="1708.5" r="5" fill="#FF780A"/><circle cx="1011.4" cy="1708.5" r="5" fill="#FF780A"/><circle cx="1037.1" cy="1708.5" r="5" fill="#FF780A"/><circle cx="1062.7" cy="1708.5" r="5" fill="#FF780A"/><circle cx="1088.3" cy="1708.5" r="5" fill="#FF780A"/><circle cx="1114" cy="1708.5" r="5" fill="#FF780A"/><circle cx="1139.6" cy="1708.5" r="5" fill="#FF780A"/><circle cx="1165.2" cy="1708.5" r="5" fill="#FF780A"/><circle cx="1190.8" cy="1708.5" r="5" fill="#FF780A"/><circle cx="1216.5" cy="1708.5" r="5" fill="#FF780A"/><circle cx="1242.1" cy="1708.5" r="5" fill="#FF780A"/><circle cx="1267.7" cy="1708.5" r="5" fill="#FF780A"/><circle cx="1293.4" cy="1708.5" r="5" fill="#FF780A"/><circle cx="1319" cy="1708.5" r="5" fill="#FF780A"/><circle cx="1344.6" cy="1708.5" r="5" fill="#FF780A"/><circle cx="1370.3" cy="1708.5" r="5" fill="#FF780A"/><circle cx="1395.9" cy="1708.5" r="5" fill="#FF780A"/><circle cx="1421.5" cy="1708.5" r="5" fill="#FF780A"/><circle cx="1447.2" cy="1708.5" r="5" fill="#FF780A"/><circle cx="1472.8" cy="1708.5" r="5" fill="#FF780A"/><circle cx="1498.4" cy="1708.5" r="5" fill="#FF780A"/><circle cx="1524" cy="1708.5" r="5" fill="#FF780A"/><circle cx="1549.7" cy="1708.5" r="5" fill="#FF780A"/><circle cx="1575.3" cy="1708.5" r="5" fill="#FF780A"/><circle cx="1600.9" cy="1708.5" r="5" fill="#FF780A"/><circle cx="1626.6" cy="1708.5" r="5" fill="#FF780A"/><circle cx="1652.2" cy="1708.5" r="5" fill="#FF780A"/><circle cx="1677.8" cy="1708.5" r="5" fill="#FF780A"/><circle cx="1703.4" cy="1708.5" r="5" fill="#FF780A"/><circle cx="1729.1" cy="1681.1" r="5" fill="#FF780A"/><circle cx="1754.7" cy="1681.1" r="5" fill="#FF780A"/><circle cx="1780.3" cy="1681.1" r="5" fill="#FF780A"/><circle cx="1806" cy="1681.1" r="5" fill="#FF780A"/><circle cx="1831.6" cy="1626.1" r="5" fill="#FF780A"/><circle cx="1857.2" cy="1625" r="5" fill="#FF780A"/><circle cx="1882.9" cy="1515.8" r="5" fill="#FF780A"/><line x1="2110.8" y1="1543.5" x2="3741.8" y2="1543.5" class="g"/><line x1="2110.8" y1="1608.5" x2="3741.8" y2="1608.5" class="g"/><line x1="2110.8" y1="1672.5" x2="3741.8" y2="1672.5" class="g"/><line x1="2110.8" y1="1736.5" x2="3741.8" y2="1736.5" class="g"/><line x1="2612.5" y1="1493.7" x2="2612.5" y2="1743.4" class="g"/><line x1="3154.5" y1="1493.7" x2="3154.5" y2="1743.4" class="g"/><line x1="3695.5" y1="1493.7" x2="3695.5" y2="1743.4" class="g"/><text x="2612.4" y="1771.8" text-anchor="middle" class="ax">21:50</text><text x="3154.5" y="1771.8" text-anchor="middle" class="ax">21:55</text><text x="3695.4" y="1771.8" text-anchor="middle" class="ax">22:00</text><polyline points="2315,1693 2342.1,1650 2369.1,1607.6 2396.2,1585.1 2423.2,1596 2450.2,1607.6 2477.3,1572.9 2504.3,1560.7 2531.4,1560.7 2558.4,1560.7 2585.5,1560.7 2612.6,1572.9 2639.6,1596 2666.7,1572.9 2693.7,1596 2720.8,1549.2 2747.8,1572.9 2774.8,1572.9 2801.9,1596 2828.9,1642.9 2856,1678.2 2883.1,1678.2 2910.1,1618.5 2937.2,1583.8 2964.2,1513.9 2991.2,1549.2 3018.3,1572.9 3045.3,1596 3072.4,1572.9 3099.4,1583.8 3126.5,1607.6 3153.6,1607.6 3180.6,1572.9 3207.7,1583.8 3234.7,1596 3261.8,1654.5 3288.8,1665.4 3315.8,1678.2 3342.9,1642.9 3369.9,1607.6 3397,1607.6 3424.1,1618.5 3451.1,1607.6 3478.2,1607.6 3505.2,1583.8 3532.2,1572.9 3559.3,1560.7 3586.4,1560.7 3613.4,1560.7 3640.4,1549.2 3667.5,1583.8 3694.6,1572.9 3721.6,1607.6" fill="none" stroke="#73BF69" stroke-width="2" stroke-linejoin="round"/><circle cx="2315" cy="1693" r="5" fill="#73BF69"/><circle cx="2342.1" cy="1650" r="5" fill="#73BF69"/><circle cx="2369.1" cy="1607.6" r="5" fill="#73BF69"/><circle cx="2396.2" cy="1585.1" r="5" fill="#73BF69"/><circle cx="2423.2" cy="1596" r="5" fill="#73BF69"/><circle cx="2450.2" cy="1607.6" r="5" fill="#73BF69"/><circle cx="2477.3" cy="1572.9" r="5" fill="#73BF69"/><circle cx="2504.3" cy="1560.7" r="5" fill="#73BF69"/><circle cx="2531.4" cy="1560.7" r="5" fill="#73BF69"/><circle cx="2558.4" cy="1560.7" r="5" fill="#73BF69"/><circle cx="2585.5" cy="1560.7" r="5" fill="#73BF69"/><circle cx="2612.6" cy="1572.9" r="5" fill="#73BF69"/><circle cx="2639.6" cy="1596" r="5" fill="#73BF69"/><circle cx="2666.7" cy="1572.9" r="5" fill="#73BF69"/><circle cx="2693.7" cy="1596" r="5" fill="#73BF69"/><circle cx="2720.8" cy="1549.2" r="5" fill="#73BF69"/><circle cx="2747.8" cy="1572.9" r="5" fill="#73BF69"/><circle cx="2774.8" cy="1572.9" r="5" fill="#73BF69"/><circle cx="2801.9" cy="1596" r="5" fill="#73BF69"/><circle cx="2828.9" cy="1642.9" r="5" fill="#73BF69"/><circle cx="2856" cy="1678.2" r="5" fill="#73BF69"/><circle cx="2883.1" cy="1678.2" r="5" fill="#73BF69"/><circle cx="2910.1" cy="1618.5" r="5" fill="#73BF69"/><circle cx="2937.2" cy="1583.8" r="5" fill="#73BF69"/><circle cx="2964.2" cy="1513.9" r="5" fill="#73BF69"/><circle cx="2991.2" cy="1549.2" r="5" fill="#73BF69"/><circle cx="3018.3" cy="1572.9" r="5" fill="#73BF69"/><circle cx="3045.3" cy="1596" r="5" fill="#73BF69"/><circle cx="3072.4" cy="1572.9" r="5" fill="#73BF69"/><circle cx="3099.4" cy="1583.8" r="5" fill="#73BF69"/><circle cx="3126.5" cy="1607.6" r="5" fill="#73BF69"/><circle cx="3153.6" cy="1607.6" r="5" fill="#73BF69"/><circle cx="3180.6" cy="1572.9" r="5" fill="#73BF69"/><circle cx="3207.7" cy="1583.8" r="5" fill="#73BF69"/><circle cx="3234.7" cy="1596" r="5" fill="#73BF69"/><circle cx="3261.8" cy="1654.5" r="5" fill="#73BF69"/><circle cx="3288.8" cy="1665.4" r="5" fill="#73BF69"/><circle cx="3315.8" cy="1678.2" r="5" fill="#73BF69"/><circle cx="3342.9" cy="1642.9" r="5" fill="#73BF69"/><circle cx="3369.9" cy="1607.6" r="5" fill="#73BF69"/><circle cx="3397" cy="1607.6" r="5" fill="#73BF69"/><circle cx="3424.1" cy="1618.5" r="5" fill="#73BF69"/><circle cx="3451.1" cy="1607.6" r="5" fill="#73BF69"/><circle cx="3478.2" cy="1607.6" r="5" fill="#73BF69"/><circle cx="3505.2" cy="1583.8" r="5" fill="#73BF69"/><circle cx="3532.2" cy="1572.9" r="5" fill="#73BF69"/><circle cx="3559.3" cy="1560.7" r="5" fill="#73BF69"/><circle cx="3586.4" cy="1560.7" r="5" fill="#73BF69"/><circle cx="3613.4" cy="1560.7" r="5" fill="#73BF69"/><circle cx="3640.4" cy="1549.2" r="5" fill="#73BF69"/><circle cx="3667.5" cy="1583.8" r="5" fill="#73BF69"/><circle cx="3694.6" cy="1572.9" r="5" fill="#73BF69"/><circle cx="3721.6" cy="1607.6" r="5" fill="#73BF69"/><polyline points="2315,1693 2342.1,1650 2369.1,1607.6 2396.2,1585.1 2423.2,1596 2450.2,1607.6 2477.3,1572.9 2504.3,1560.7 2531.4,1560.7 2558.4,1560.7 2585.5,1560.7 2612.6,1572.9 2639.6,1596 2666.7,1572.9 2693.7,1596 2720.8,1549.2 2747.8,1572.9 2774.8,1572.9 2801.9,1607.6 2828.9,1653.8 2856,1688.5 2883.1,1688.5 2910.1,1665.4 2937.2,1654.5 2964.2,1618.5 2991.2,1642.9 3018.3,1654.5 3045.3,1678.2 3072.4,1678.2 3099.4,1688.5 3126.5,1678.2 3153.6,1665.4 3180.6,1630.7 3207.7,1654.5 3234.7,1678.2 3261.8,1723.8 3288.8,1712.2 3315.8,1712.2 3342.9,1678.2 3369.9,1642.9 3397,1642.9 3424.1,1654.5 3451.1,1688.5 3478.2,1700.7 3505.2,1688.5 3532.2,1665.4 3559.3,1630.7 3586.4,1618.5 3613.4,1630.7 3640.4,1654.5 3667.5,1688.5 3694.6,1688.5 3721.6,1688.5" fill="none" stroke="#F2CC0C" stroke-width="2" stroke-linejoin="round"/><circle cx="2315" cy="1693" r="5" fill="#F2CC0C"/><circle cx="2342.1" cy="1650" r="5" fill="#F2CC0C"/><circle cx="2369.1" cy="1607.6" r="5" fill="#F2CC0C"/><circle cx="2396.2" cy="1585.1" r="5" fill="#F2CC0C"/><circle cx="2423.2" cy="1596" r="5" fill="#F2CC0C"/><circle cx="2450.2" cy="1607.6" r="5" fill="#F2CC0C"/><circle cx="2477.3" cy="1572.9" r="5" fill="#F2CC0C"/><circle cx="2504.3" cy="1560.7" r="5" fill="#F2CC0C"/><circle cx="2531.4" cy="1560.7" r="5" fill="#F2CC0C"/><circle cx="2558.4" cy="1560.7" r="5" fill="#F2CC0C"/><circle cx="2585.5" cy="1560.7" r="5" fill="#F2CC0C"/><circle cx="2612.6" cy="1572.9" r="5" fill="#F2CC0C"/><circle cx="2639.6" cy="1596" r="5" fill="#F2CC0C"/><circle cx="2666.7" cy="1572.9" r="5" fill="#F2CC0C"/><circle cx="2693.7" cy="1596" r="5" fill="#F2CC0C"/><circle cx="2720.8" cy="1549.2" r="5" fill="#F2CC0C"/><circle cx="2747.8" cy="1572.9" r="5" fill="#F2CC0C"/><circle cx="2774.8" cy="1572.9" r="5" fill="#F2CC0C"/><circle cx="2801.9" cy="1607.6" r="5" fill="#F2CC0C"/><circle cx="2828.9" cy="1653.8" r="5" fill="#F2CC0C"/><circle cx="2856" cy="1688.5" r="5" fill="#F2CC0C"/><circle cx="2883.1" cy="1688.5" r="5" fill="#F2CC0C"/><circle cx="2910.1" cy="1665.4" r="5" fill="#F2CC0C"/><circle cx="2937.2" cy="1654.5" r="5" fill="#F2CC0C"/><circle cx="2964.2" cy="1618.5" r="5" fill="#F2CC0C"/><circle cx="2991.2" cy="1642.9" r="5" fill="#F2CC0C"/><circle cx="3018.3" cy="1654.5" r="5" fill="#F2CC0C"/><circle cx="3045.3" cy="1678.2" r="5" fill="#F2CC0C"/><circle cx="3072.4" cy="1678.2" r="5" fill="#F2CC0C"/><circle cx="3099.4" cy="1688.5" r="5" fill="#F2CC0C"/><circle cx="3126.5" cy="1678.2" r="5" fill="#F2CC0C"/><circle cx="3153.6" cy="1665.4" r="5" fill="#F2CC0C"/><circle cx="3180.6" cy="1630.7" r="5" fill="#F2CC0C"/><circle cx="3207.7" cy="1654.5" r="5" fill="#F2CC0C"/><circle cx="3234.7" cy="1678.2" r="5" fill="#F2CC0C"/><circle cx="3261.8" cy="1723.8" r="5" fill="#F2CC0C"/><circle cx="3288.8" cy="1712.2" r="5" fill="#F2CC0C"/><circle cx="3315.8" cy="1712.2" r="5" fill="#F2CC0C"/><circle cx="3342.9" cy="1678.2" r="5" fill="#F2CC0C"/><circle cx="3369.9" cy="1642.9" r="5" fill="#F2CC0C"/><circle cx="3397" cy="1642.9" r="5" fill="#F2CC0C"/><circle cx="3424.1" cy="1654.5" r="5" fill="#F2CC0C"/><circle cx="3451.1" cy="1688.5" r="5" fill="#F2CC0C"/><circle cx="3478.2" cy="1700.7" r="5" fill="#F2CC0C"/><circle cx="3505.2" cy="1688.5" r="5" fill="#F2CC0C"/><circle cx="3532.2" cy="1665.4" r="5" fill="#F2CC0C"/><circle cx="3559.3" cy="1630.7" r="5" fill="#F2CC0C"/><circle cx="3586.4" cy="1618.5" r="5" fill="#F2CC0C"/><circle cx="3613.4" cy="1630.7" r="5" fill="#F2CC0C"/><circle cx="3640.4" cy="1654.5" r="5" fill="#F2CC0C"/><circle cx="3667.5" cy="1688.5" r="5" fill="#F2CC0C"/><circle cx="3694.6" cy="1688.5" r="5" fill="#F2CC0C"/><circle cx="3721.6" cy="1688.5" r="5" fill="#F2CC0C"/><polyline points="2315,1693 2342.1,1650 2369.1,1607.6 2396.2,1585.1 2423.2,1596 2450.2,1607.6 2477.3,1572.9 2504.3,1560.7 2531.4,1560.7 2558.4,1560.7 2585.5,1560.7 2612.6,1572.9 2639.6,1596 2666.7,1572.9 2693.7,1596 2720.8,1549.2 2747.8,1572.9 2774.8,1572.9 2801.9,1596 2828.9,1642.9 2856,1678.2 2883.1,1678.2 2910.1,1618.5 2937.2,1583.8 2964.2,1513.9 2991.2,1549.2 3018.3,1572.9 3045.3,1596 3072.4,1572.9 3099.4,1583.8 3126.5,1607.6 3153.6,1607.6 3180.6,1572.9 3207.7,1583.8 3234.7,1596 3261.8,1654.5 3288.8,1665.4 3315.8,1678.2 3342.9,1642.9 3369.9,1607.6 3397,1607.6 3424.1,1618.5 3451.1,1607.6 3478.2,1607.6 3505.2,1583.8 3532.2,1572.9 3559.3,1560.7 3586.4,1560.7 3613.4,1572.9 3640.4,1549.2 3667.5,1583.8 3694.6,1572.9 3721.6,1607.6" fill="none" stroke="#8AB8FF" stroke-width="2" stroke-linejoin="round"/><circle cx="2315" cy="1693" r="5" fill="#8AB8FF"/><circle cx="2342.1" cy="1650" r="5" fill="#8AB8FF"/><circle cx="2369.1" cy="1607.6" r="5" fill="#8AB8FF"/><circle cx="2396.2" cy="1585.1" r="5" fill="#8AB8FF"/><circle cx="2423.2" cy="1596" r="5" fill="#8AB8FF"/><circle cx="2450.2" cy="1607.6" r="5" fill="#8AB8FF"/><circle cx="2477.3" cy="1572.9" r="5" fill="#8AB8FF"/><circle cx="2504.3" cy="1560.7" r="5" fill="#8AB8FF"/><circle cx="2531.4" cy="1560.7" r="5" fill="#8AB8FF"/><circle cx="2558.4" cy="1560.7" r="5" fill="#8AB8FF"/><circle cx="2585.5" cy="1560.7" r="5" fill="#8AB8FF"/><circle cx="2612.6" cy="1572.9" r="5" fill="#8AB8FF"/><circle cx="2639.6" cy="1596" r="5" fill="#8AB8FF"/><circle cx="2666.7" cy="1572.9" r="5" fill="#8AB8FF"/><circle cx="2693.7" cy="1596" r="5" fill="#8AB8FF"/><circle cx="2720.8" cy="1549.2" r="5" fill="#8AB8FF"/><circle cx="2747.8" cy="1572.9" r="5" fill="#8AB8FF"/><circle cx="2774.8" cy="1572.9" r="5" fill="#8AB8FF"/><circle cx="2801.9" cy="1596" r="5" fill="#8AB8FF"/><circle cx="2828.9" cy="1642.9" r="5" fill="#8AB8FF"/><circle cx="2856" cy="1678.2" r="5" fill="#8AB8FF"/><circle cx="2883.1" cy="1678.2" r="5" fill="#8AB8FF"/><circle cx="2910.1" cy="1618.5" r="5" fill="#8AB8FF"/><circle cx="2937.2" cy="1583.8" r="5" fill="#8AB8FF"/><circle cx="2964.2" cy="1513.9" r="5" fill="#8AB8FF"/><circle cx="2991.2" cy="1549.2" r="5" fill="#8AB8FF"/><circle cx="3018.3" cy="1572.9" r="5" fill="#8AB8FF"/><circle cx="3045.3" cy="1596" r="5" fill="#8AB8FF"/><circle cx="3072.4" cy="1572.9" r="5" fill="#8AB8FF"/><circle cx="3099.4" cy="1583.8" r="5" fill="#8AB8FF"/><circle cx="3126.5" cy="1607.6" r="5" fill="#8AB8FF"/><circle cx="3153.6" cy="1607.6" r="5" fill="#8AB8FF"/><circle cx="3180.6" cy="1572.9" r="5" fill="#8AB8FF"/><circle cx="3207.7" cy="1583.8" r="5" fill="#8AB8FF"/><circle cx="3234.7" cy="1596" r="5" fill="#8AB8FF"/><circle cx="3261.8" cy="1654.5" r="5" fill="#8AB8FF"/><circle cx="3288.8" cy="1665.4" r="5" fill="#8AB8FF"/><circle cx="3315.8" cy="1678.2" r="5" fill="#8AB8FF"/><circle cx="3342.9" cy="1642.9" r="5" fill="#8AB8FF"/><circle cx="3369.9" cy="1607.6" r="5" fill="#8AB8FF"/><circle cx="3397" cy="1607.6" r="5" fill="#8AB8FF"/><circle cx="3424.1" cy="1618.5" r="5" fill="#8AB8FF"/><circle cx="3451.1" cy="1607.6" r="5" fill="#8AB8FF"/><circle cx="3478.2" cy="1607.6" r="5" fill="#8AB8FF"/><circle cx="3505.2" cy="1583.8" r="5" fill="#8AB8FF"/><circle cx="3532.2" cy="1572.9" r="5" fill="#8AB8FF"/><circle cx="3559.3" cy="1560.7" r="5" fill="#8AB8FF"/><circle cx="3586.4" cy="1560.7" r="5" fill="#8AB8FF"/><circle cx="3613.4" cy="1572.9" r="5" fill="#8AB8FF"/><circle cx="3640.4" cy="1549.2" r="5" fill="#8AB8FF"/><circle cx="3667.5" cy="1583.8" r="5" fill="#8AB8FF"/><circle cx="3694.6" cy="1572.9" r="5" fill="#8AB8FF"/><circle cx="3721.6" cy="1607.6" r="5" fill="#8AB8FF"/><polyline points="2315,1693 2342.1,1650 2369.1,1607.6 2396.2,1585.1 2423.2,1596 2450.2,1607.6 2477.3,1572.9 2504.3,1560.7 2531.4,1560.7 2558.4,1560.7 2585.5,1560.7 2612.6,1572.9 2639.6,1596 2666.7,1572.9 2693.7,1596 2720.8,1549.2 2747.8,1572.9 2774.8,1572.9 2801.9,1596 2828.9,1642.9 2856,1678.2 2883.1,1678.2 2910.1,1618.5 2937.2,1583.8 2964.2,1513.9 2991.2,1549.2 3018.3,1572.9 3045.3,1596 3072.4,1572.9 3099.4,1583.8 3126.5,1607.6 3153.6,1607.6 3180.6,1572.9 3207.7,1583.8 3234.7,1596 3261.8,1654.5 3288.8,1665.4 3315.8,1678.2 3342.9,1642.9 3369.9,1607.6 3397,1607.6 3424.1,1618.5 3451.1,1607.6 3478.2,1607.6 3505.2,1583.8 3532.2,1572.9 3559.3,1560.7 3586.4,1560.7 3613.4,1572.9 3640.4,1549.2 3667.5,1583.8 3694.6,1572.9 3721.6,1607.6" fill="none" stroke="#FF780A" stroke-width="2" stroke-linejoin="round"/><circle cx="2315" cy="1693" r="5" fill="#FF780A"/><circle cx="2342.1" cy="1650" r="5" fill="#FF780A"/><circle cx="2369.1" cy="1607.6" r="5" fill="#FF780A"/><circle cx="2396.2" cy="1585.1" r="5" fill="#FF780A"/><circle cx="2423.2" cy="1596" r="5" fill="#FF780A"/><circle cx="2450.2" cy="1607.6" r="5" fill="#FF780A"/><circle cx="2477.3" cy="1572.9" r="5" fill="#FF780A"/><circle cx="2504.3" cy="1560.7" r="5" fill="#FF780A"/><circle cx="2531.4" cy="1560.7" r="5" fill="#FF780A"/><circle cx="2558.4" cy="1560.7" r="5" fill="#FF780A"/><circle cx="2585.5" cy="1560.7" r="5" fill="#FF780A"/><circle cx="2612.6" cy="1572.9" r="5" fill="#FF780A"/><circle cx="2639.6" cy="1596" r="5" fill="#FF780A"/><circle cx="2666.7" cy="1572.9" r="5" fill="#FF780A"/><circle cx="2693.7" cy="1596" r="5" fill="#FF780A"/><circle cx="2720.8" cy="1549.2" r="5" fill="#FF780A"/><circle cx="2747.8" cy="1572.9" r="5" fill="#FF780A"/><circle cx="2774.8" cy="1572.9" r="5" fill="#FF780A"/><circle cx="2801.9" cy="1596" r="5" fill="#FF780A"/><circle cx="2828.9" cy="1642.9" r="5" fill="#FF780A"/><circle cx="2856" cy="1678.2" r="5" fill="#FF780A"/><circle cx="2883.1" cy="1678.2" r="5" fill="#FF780A"/><circle cx="2910.1" cy="1618.5" r="5" fill="#FF780A"/><circle cx="2937.2" cy="1583.8" r="5" fill="#FF780A"/><circle cx="2964.2" cy="1513.9" r="5" fill="#FF780A"/><circle cx="2991.2" cy="1549.2" r="5" fill="#FF780A"/><circle cx="3018.3" cy="1572.9" r="5" fill="#FF780A"/><circle cx="3045.3" cy="1596" r="5" fill="#FF780A"/><circle cx="3072.4" cy="1572.9" r="5" fill="#FF780A"/><circle cx="3099.4" cy="1583.8" r="5" fill="#FF780A"/><circle cx="3126.5" cy="1607.6" r="5" fill="#FF780A"/><circle cx="3153.6" cy="1607.6" r="5" fill="#FF780A"/><circle cx="3180.6" cy="1572.9" r="5" fill="#FF780A"/><circle cx="3207.7" cy="1583.8" r="5" fill="#FF780A"/><circle cx="3234.7" cy="1596" r="5" fill="#FF780A"/><circle cx="3261.8" cy="1654.5" r="5" fill="#FF780A"/><circle cx="3288.8" cy="1665.4" r="5" fill="#FF780A"/><circle cx="3315.8" cy="1678.2" r="5" fill="#FF780A"/><circle cx="3342.9" cy="1642.9" r="5" fill="#FF780A"/><circle cx="3369.9" cy="1607.6" r="5" fill="#FF780A"/><circle cx="3397" cy="1607.6" r="5" fill="#FF780A"/><circle cx="3424.1" cy="1618.5" r="5" fill="#FF780A"/><circle cx="3451.1" cy="1607.6" r="5" fill="#FF780A"/><circle cx="3478.2" cy="1607.6" r="5" fill="#FF780A"/><circle cx="3505.2" cy="1583.8" r="5" fill="#FF780A"/><circle cx="3532.2" cy="1572.9" r="5" fill="#FF780A"/><circle cx="3559.3" cy="1560.7" r="5" fill="#FF780A"/><circle cx="3586.4" cy="1560.7" r="5" fill="#FF780A"/><circle cx="3613.4" cy="1572.9" r="5" fill="#FF780A"/><circle cx="3640.4" cy="1549.2" r="5" fill="#FF780A"/><circle cx="3667.5" cy="1583.8" r="5" fill="#FF780A"/><circle cx="3694.6" cy="1572.9" r="5" fill="#FF780A"/><circle cx="3721.6" cy="1607.6" r="5" fill="#FF780A"/>
<g clip-path="url(#c5)"><text x="345.6" y="1519.8" text-anchor="end" class="ax" style="font-size:25.3px">400 milliseconds</text><text x="345.6" y="1630.8" text-anchor="end" class="ax" style="font-size:25.3px">200 milliseconds</text><text x="345.6" y="1741.8" text-anchor="end" class="ax" style="font-size:25.3px">0 milliseconds</text></g>
<defs><clipPath id="c6"><rect x="2004" y="1480" width="400" height="300"/></clipPath></defs>
<g clip-path="url(#c6)"><text x="2100" y="1549" text-anchor="end" class="ax" style="font-size:25.3px">0.3 req/s</text><text x="2100" y="1614" text-anchor="end" class="ax" style="font-size:25.3px">0.2 req/s</text><text x="2100" y="1678.1" text-anchor="end" class="ax" style="font-size:25.3px">0.1 req/s</text><text x="2100" y="1741.8" text-anchor="end" class="ax" style="font-size:25.3px">0.0 req/s</text></g>
</svg>
<div class="lm" style="left:196px;top:668px;background:#73BF69"></div><div class="lt" style="left:240px;top:657px;width:2400px;transform:scaleX(1);transform-origin:0 0">{exported_job=&quot;recommendationservice&quot;, instance=&quot;otelcol:9464&quot;, job=&quot;otel&quot;, type=&quot;system&quot;}</div><div class="lm" style="left:196px;top:712px;background:#F2CC0C"></div><div class="lt" style="left:240px;top:701px;width:2400px;transform:scaleX(1);transform-origin:0 0">{exported_job=&quot;recommendationservice&quot;, instance=&quot;otelcol:9464&quot;, job=&quot;otel&quot;, type=&quot;user&quot;}</div><div class="lm" style="left:2036px;top:668px;background:#73BF69"></div><div class="lt" style="left:2080.5px;top:657px;width:1711.8px;transform:scaleX(1);transform-origin:0 0">{exported_job=&quot;recommendationservice&quot;, instance=&quot;otelcol:9464&quot;, job=&quot;otel&quot;, type=&quot;rss&quot;}</div><div class="lm" style="left:2036px;top:712px;background:#F2CC0C"></div><div class="lt" style="left:2080.5px;top:701px;width:1711.8px;transform:scaleX(1);transform-origin:0 0">{exported_job=&quot;recommendationservice&quot;, instance=&quot;otelcol:9464&quot;, job=&quot;otel&quot;, type=&quot;vms&quot;}</div><div class="lm" style="left:196px;top:1320.2px;background:#73BF69"></div><div class="lt" style="left:240px;top:1309.2px;width:2400px;transform:scaleX(1.004);transform-origin:0 0">{exported_job=&quot;recommendationservice&quot;, instance=&quot;otelcol:9464&quot;, job=&quot;otel&quot;, recommendation_type=&quot;catalog&quot;}</div><div class="lm" style="left:2036px;top:1320.2px;background:#73BF69"></div><div class="lt" style="left:2080.5px;top:1309.2px;width:1753.9px;transform:scaleX(0.976);transform-origin:0 0">{instance=&quot;otelcol:9464&quot;, job=&quot;otel&quot;, operation=&quot;HTTP GET&quot;, service_name=&quot;loadgenerator&quot;, span_kind=&quot;SPAN_KIND_CLIENT&quot;, status_code=&quot;STATUS_CODE_ERROR&quot;}</div><div class="lm" style="left:196px;top:1800px;background:#73BF69"></div><div class="lt" style="left:240px;top:1789px;width:2400px;transform:scaleX(1.0095);transform-origin:0 0">histogram_quantile(0.50, sum(rate(latency_bucket{service_name=&quot;recommendationservice&quot;}[1m0s])) by (le))</div><div class="lm" style="left:196px;top:1844.1px;background:#F2CC0C"></div><div class="lt" style="left:240px;top:1833.1px;width:2400px;transform:scaleX(1.0095);transform-origin:0 0">histogram_quantile(0.95, sum(rate(latency_bucket{service_name=&quot;recommendationservice&quot;}[1m0s])) by (le))</div><div class="lm" style="left:196px;top:1888.3px;background:#8AB8FF"></div><div class="lt" style="left:240px;top:1877.3px;width:2400px;transform:scaleX(1.0095);transform-origin:0 0">histogram_quantile(0.99, sum(rate(latency_bucket{service_name=&quot;recommendationservice&quot;}[1m0s])) by (le))</div><div class="lm" style="left:196px;top:1931.6px;background:#FF780A"></div><div class="lt" style="left:240px;top:1920.6px;width:2400px;transform:scaleX(1.0095);transform-origin:0 0">histogram_quantile(0.999, sum(rate(latency_bucket{service_name=&quot;recommendationservice&quot;}[1m0s])) by (le))</div><div class="lm" style="left:2036px;top:1800px;background:#73BF69"></div><div class="lt" style="left:2080.5px;top:1789px;width:1711.8px;transform:scaleX(1.0);transform-origin:0 0">{instance=&quot;otelcol:9464&quot;, job=&quot;otel&quot;, operation=&quot;/hipstershop.FeatureFlagService/GetFlag&quot;, service_name=&quot;recommendationservice&quot;, span_kind=&quot;SPAN_KIND_SERVER&quot;, status_code=&quot;STATUS_CODE_UNSET&quot;}</div><div class="lm" style="left:2036px;top:1844.1px;background:#F2CC0C"></div><div class="lt" style="left:2080.5px;top:1833.1px;width:1698.2px;transform:scaleX(1.008);transform-origin:0 0">{instance=&quot;otelcol:9464&quot;, job=&quot;otel&quot;, operation=&quot;/hipstershop.ProductCatalogService/ListProducts&quot;, service_name=&quot;recommendationservice&quot;, span_kind=&quot;SPAN_KIND_CLIENT&quot;, status_code=&quot;STATUS_CODE_UNSET&quot;}</div><div class="lm" style="left:2036px;top:1888.3px;background:#8AB8FF"></div><div class="lt" style="left:2080.5px;top:1877.3px;width:1698.2px;transform:scaleX(1.008);transform-origin:0 0">{instance=&quot;otelcol:9464&quot;, job=&quot;otel&quot;, operation=&quot;/hipstershop.RecommendationService/ListRecommendations&quot;, service_name=&quot;recommendationservice&quot;, span_kind=&quot;SPAN_KIND_SERVER&quot;, status_code=&quot;STATUS_CODE_UNSET&quot;}</div><div class="lm" style="left:2036px;top:1931.6px;background:#FF780A"></div><div class="lt" style="left:2080.5px;top:1920.6px;width:1734.3px;transform:scaleX(0.987);transform-origin:0 0">{instance=&quot;otelcol:9464&quot;, job=&quot;otel&quot;, operation=&quot;get_product_list&quot;, service_name=&quot;recommendationservice&quot;, span_kind=&quot;SPAN_KIND_INTERNAL&quot;, status_code=&quot;STATUS_CODE_UNSET&quot;}</div>
<svg style="position:absolute;left:0px;top:0px" width="100" height="100" viewBox="0 0 100 100" ><defs><linearGradient id="lg" x1="0" y1="0" x2="0" y2="1"><stop offset="0" stop-color="#F05A28"/><stop offset="0.3" stop-color="#F26526"/><stop offset="1" stop-color="#FBCA0A"/></linearGradient></defs>
<path fill="url(#lg)" d="M57.9,38 Q60,42 62.5,44.2 Q66.5,43.3 70.8,43.5 Q70.6,46 71,47.2 A17.3,17.3 0 0 1 77.9,60.6 L72.6,62.3 L75.6,65.5 Q76.5,69 77.2,73.2 Q72,74 68.9,76.5 Q66.5,80 63.7,84.8 Q60,81 56.1,80.8 Q50,82 45.1,83.6 Q44,79 43,75.5 Q38,71 34.1,66.8 Q38,63 40.5,59.5 Q39.5,53 38.7,46.3 Q45,46 50.5,44.8 Q54.5,41.5 57.9,38 Z"/>
<path fill="#181b1f" fill-rule="evenodd" d="M46.9,61.75 A13.65,13.65 0 1 0 74.2,61.75 A13.65,13.65 0 1 0 46.9,61.75 Z M53.3,62.9 A8.1,8.1 0 1 1 69.5,62.9 A8.1,8.1 0 1 1 53.3,62.9 Z"/>
<circle cx="62.8" cy="64.3" r="5.6" fill="#181b1f"/>
<path fill="#181b1f" d="M65.5,68.3 L69.8,65.5 L71,69.5 L66.5,71 Z"/></svg><svg style="position:absolute;left:0px;top:0px" width="120" height="200" viewBox="0 0 120 200" ><g fill="none" stroke="#8e8f9b" stroke-width="4" stroke-linecap="round" stroke-linejoin="round"><circle cx="54" cy="156" r="16"/><line x1="66" y1="168" x2="74.5" y2="176.5"/></g></svg><svg style="position:absolute;left:0;top:200px" width="120" height="100" viewBox="0 200 120 100"><path fill="none" stroke="#8e8f9b" stroke-width="4" stroke-linejoin="round" d="M55.8,237.5 L61.5,249 L73.5,250.8 L64.6,259.3 L66.8,271 L55.8,265.3 L44.8,271 L47,259.3 L38.1,250.8 L50.1,249 Z"/></svg><svg style="position:absolute;left:0;top:300px" width="120" height="100" viewBox="0 300 120 100"><g fill="none" stroke="#ccccdc" stroke-width="4"><rect x="38" y="332" width="14" height="14" rx="1.5"/><rect x="38" y="354" width="14" height="14" rx="1.5"/><rect x="60" y="332" width="14" height="14" rx="1.5"/><rect x="60" y="354" width="14" height="14" rx="1.5"/></g></svg><div style="position:absolute;left:16px;top:326px;width:8px;height:48px;border-radius:4px;background:linear-gradient(0deg,#F55F3E,#FF8833)"></div><svg style="position:absolute;left:0;top:400px" width="120" height="100" viewBox="0 400 120 100"><g fill="none" stroke="#8e8f9b" stroke-width="4" stroke-linecap="round" stroke-linejoin="round"><circle cx="56" cy="446.4" r="17.5"/><line x1="56" y1="429" x2="56" y2="433"/><line x1="56" y1="460" x2="56" y2="464"/><line x1="39" y1="446.4" x2="43" y2="446.4"/><line x1="69" y1="446.4" x2="73" y2="446.4"/><path d="M63,439.4 L59.5,450 L49,453.4 L52.5,442.8 Z"/></g></svg><svg style="position:absolute;left:0;top:500px" width="120" height="100" viewBox="0 500 120 100"><g fill="none" stroke="#8e8f9b" stroke-width="4" stroke-linecap="round" stroke-linejoin="round"><line x1="56" y1="524" x2="56" y2="527"/><path d="M46,545 L46,537 C46,530.5 50.5,527 56,527 C61.5,527 66,530.5 66,537 L66,545"/><rect x="42" y="546.7" width="28" height="6.7" rx="3"/><path d="M51.5,555.5 C51.5,558.5 53.5,560 56,560 C58.5,560 60.5,558.5 60.5,555.5"/></g></svg><svg style="position:absolute;left:0;top:1650px" width="120" height="100" viewBox="0 1650 120 100"><g fill="none" stroke="#8e8f9b" stroke-width="4" stroke-linecap="round" stroke-linejoin="round"><path d="M42,1684 L42,1680 C42,1677.5 44,1676 46,1676 L66,1676 C68.5,1676 70,1678 70,1680 L70,1707.5 C70,1710 68,1711.5 66,1711.5 L46,1711.5 C43.5,1711.5 42,1709.5 42,1707.5 L42,1703"/><line x1="42" y1="1693.8" x2="61" y2="1693.8"/><path d="M54,1686.5 L61.5,1693.8 L54,1701"/></g></svg><svg style="position:absolute;left:0;top:1740px" width="120" height="100" viewBox="0 1740 120 100"><g fill="none" stroke="#8e8f9b" stroke-width="4" stroke-linecap="round" stroke-linejoin="round"><path d="M52.99,1772.16 L59.01,1772.16 L59.84,1777.28 L62.07,1778.20 L66.28,1775.17 L70.53,1779.42 L67.50,1783.63 L68.42,1785.86 L73.54,1786.69 L73.54,1792.71 L68.42,1793.54 L67.50,1795.77 L70.53,1799.98 L66.28,1804.23 L62.07,1801.20 L59.84,1802.12 L59.01,1807.24 L52.99,1807.24 L52.16,1802.12 L49.93,1801.20 L45.72,1804.23 L41.47,1799.98 L44.50,1795.77 L43.58,1793.54 L38.46,1792.71 L38.46,1786.69 L43.58,1785.86 L44.50,1783.63 L41.47,1779.42 L45.72,1775.17 L49.93,1778.20 L52.16,1777.28 Z"/><circle cx="56" cy="1789.7" r="5"/></g></svg><svg style="position:absolute;left:0;top:1840px" width="120" height="100" viewBox="0 1840 120 100"><g fill="none" stroke="#8e8f9b" stroke-width="4" stroke-linecap="round" stroke-linejoin="round"><circle cx="56" cy="1885.7" r="17.8"/><path d="M51.5,1881 C51.5,1878 53.5,1876.5 56,1876.5 C58.5,1876.5 60.5,1878.3 60.5,1880.8 C60.5,1884 56,1884 56,1888"/></g><circle cx="56" cy="1893.5" r="2.3" fill="#8e8f9b"/></svg><div style="position:absolute;left:88.3px;top:84.3px;width:47.4px;height:47.4px;border-radius:50%;background:#212328;border:2px solid #2c2e33;box-sizing:border-box"></div><svg style="position:absolute;left:0;top:0" width="140" height="140" viewBox="0 0 140 140"><path d="M107.7,99.6 L116.3,108 L107.7,116.4" fill="none" stroke="#ccccdc" stroke-width="4.2" stroke-linecap="round" stroke-linejoin="round"/></svg><svg style="position:absolute;left:140px;top:40px" width="50" height="45" viewBox="140 40 50 45"><g fill="none" stroke="#ccccdc" stroke-width="3.1"><rect x="150.4" y="48.4" width="10.5" height="10.7" rx="0.8"/><rect x="150.4" y="64.9" width="10.5" height="10.7" rx="0.8"/><rect x="167" y="48.4" width="10.5" height="10.7" rx="0.8"/><rect x="167" y="64.9" width="10.5" height="10.7" rx="0.8"/></g></svg><svg style="position:absolute;left:615px;top:40px" width="45" height="45" viewBox="615 40 45 45"><g fill="none" stroke="#ccccdc" stroke-width="2.9"><circle cx="647" cy="52.9" r="4.6"/><circle cx="647" cy="71.1" r="4.6"/><circle cx="628.9" cy="62" r="4.6"/><line x1="633" y1="59.9" x2="642.9" y2="55"/><line x1="633" y1="64.1" x2="642.9" y2="69"/></g></svg><div style="position:absolute;top:30px;height:64px;box-sizing:border-box;border:2px solid #24262b;background:#181b1f;border-radius:4px;left:2874px;width:84px;"></div><div style="position:absolute;top:30px;height:64px;box-sizing:border-box;border:2px solid #24262b;background:#181b1f;border-radius:4px;left:2974px;width:72px;"></div><div style="position:absolute;top:30px;height:64px;box-sizing:border-box;border:2px solid #24262b;background:#181b1f;border-radius:4px;left:3062px;width:72px;"></div><div style="position:absolute;top:30px;height:64px;box-sizing:border-box;border:2px solid #24262b;background:#181b1f;border-radius:4px;left:3150px;width:416px;"></div><div style="position:absolute;left:3494px;top:32px;width:2px;height:60px;background:#24262b"></div><div style="position:absolute;top:30px;height:64px;box-sizing:border-box;border:2px solid #24262b;background:#181b1f;border-radius:4px;left:3582px;width:138px;"></div><div style="position:absolute;left:3652px;top:32px;width:2px;height:60px;background:#24262b"></div><div style="position:absolute;top:30px;height:64px;box-sizing:border-box;border:2px solid #24262b;background:#181b1f;border-radius:4px;left:3736px;width:72px;"></div><div style="position:absolute;left:3574px;top:22px;width:86px;height:80px;box-sizing:border-box;border:4px solid #3D71D9;border-radius:10px 0 0 10px"></div><svg style="position:absolute;left:2880px;top:40px" width="70" height="45" viewBox="2880 40 70 45">
<g fill="#8e8f9b"><rect x="2892" y="58.5" width="6.8" height="16.5" rx="1"/><rect x="2900.8" y="53" width="6.8" height="22" rx="1"/><rect x="2909.6" y="60.5" width="6.8" height="14.5" rx="1"/><rect x="2918.4" y="49.5" width="6.8" height="25.5" rx="1"/></g>
<defs><linearGradient id="pg" x1="0" y1="0" x2="0" y2="1"><stop offset="0" stop-color="#F7941E"/><stop offset="1" stop-color="#FBC918"/></linearGradient></defs>
<path d="M2931,53.5 L2931,71.5 M2922.5,62.3 L2940,62.3" stroke="#181b1f" stroke-width="9"/>
<path d="M2931,53.5 L2931,71.5 M2922.5,62.3 L2940,62.3" stroke="url(#pg)" stroke-width="4.6"/></svg><svg style="position:absolute;left:2990px;top:40px" width="40" height="45" viewBox="2990 40 40 45"><g fill="none" stroke="#8e8f9b" stroke-width="2.9" stroke-linejoin="round">
<path d="M3001,50 L3015,50 L3022,57 L3022,71 C3022,73 3020.5,74 3019,74 L3001,74 C2999,74 2998,72.5 2998,71 L2998,53 C2998,51 2999.5,50 3001,50 Z"/>
<path d="M3004,50 L3004,56 L3013,56 L3013,50"/><path d="M3003,74 L3003,66 L3017,66 L3017,74"/></g></svg><svg style="position:absolute;left:3075px;top:40px" width="45" height="45" viewBox="3075 40 45 45"><g fill="none" stroke="#8e8f9b" stroke-width="2.9" stroke-linejoin="round"><path d="M3095.70,48.80 L3100.30,48.80 L3101.01,52.46 L3102.76,53.18 L3105.85,51.10 L3109.10,54.35 L3107.02,57.44 L3107.74,59.19 L3111.40,59.90 L3111.40,64.50 L3107.74,65.21 L3107.02,66.96 L3109.10,70.05 L3105.85,73.30 L3102.76,71.22 L3101.01,71.94 L3100.30,75.60 L3095.70,75.60 L3094.99,71.94 L3093.24,71.22 L3090.15,73.30 L3086.90,70.05 L3088.98,66.96 L3088.26,65.21 L3084.60,64.50 L3084.60,59.90 L3088.26,59.19 L3088.98,57.44 L3086.90,54.35 L3090.15,51.10 L3093.24,53.18 L3094.99,52.46 Z"/><circle cx="3098" cy="62.2" r="4.3"/></g></svg><svg style="position:absolute;left:3165px;top:40px" width="45" height="45" viewBox="3165 40 45 45"><g fill="none" stroke="#8e8f9b" stroke-width="2.9" stroke-linecap="round" stroke-linejoin="round"><circle cx="3185.8" cy="61.9" r="13.3"/><path d="M3185.8,53.5 L3185.8,62 L3180.5,62"/></g></svg><div style="position:absolute;left:3219.8px;top:43.5px;font:bold 27.5px 'Liberation Sans', sans-serif;color:#8e8f9b;white-space:nowrap;line-height:38px">Last 15 minutes</div><svg style="position:absolute;left:3440px;top:40px" width="270" height="45" viewBox="3440 40 270 45"><g fill="none" stroke="#8e8f9b" stroke-width="3" stroke-linecap="round" stroke-linejoin="round"><path d="M3456.3,58.5 L3462,64.2 L3467.7,58.5"/><path d="M3680.5,59 L3686,64.3 L3691.5,59"/></g></svg><svg style="position:absolute;left:3505px;top:40px" width="45" height="45" viewBox="3505 40 45 45"><g fill="none" stroke="#8e8f9b" stroke-width="2.9" stroke-linecap="round"><circle cx="3528" cy="60.5" r="11.8"/><line x1="3522" y1="60.5" x2="3534" y2="60.5"/><line x1="3537" y1="69.5" x2="3544" y2="76"/></g></svg><svg style="position:absolute;left:3595px;top:40px" width="45" height="45" viewBox="3595 40 45 45"><g fill="none" stroke="#8e8f9b" stroke-width="2.9" stroke-linecap="round" stroke-linejoin="round"><path d="M3630.6,62 A12.6,12.6 0 0 0 3608.5,53.5"/><path d="M3605.4,63 A12.6,12.6 0 0 0 3627.5,71.5"/><path d="M3607,48.5 L3607.5,54.5 L3613.5,54"/><path d="M3629,76 L3628.5,70.5 L3622.5,71"/></g></svg><svg style="position:absolute;left:3750px;top:40px" width="45" height="45" viewBox="3750 40 45 45"><g fill="none" stroke="#8e8f9b" stroke-width="2.9" stroke-linejoin="round"><rect x="3758.7" y="48.7" width="26.6" height="20.4" rx="2.5"/><line x1="3758.7" y1="64" x2="3785.3" y2="64"/><path d="M3767.5,70 L3765.5,75 L3778.5,75 L3776.5,70"/></g></svg><div style="position:absolute;left:3496px;top:110px;width:243px;height:56px;background:#22252b;border-radius:6px;box-shadow:0 2px 6px rgba(0,0,0,.3)"></div><svg style="position:absolute;left:3600px;top:90px" width="45" height="25" viewBox="3600 90 45 25"><path d="M3606.5,110 L3620,95.5 Q3622,93.5 3624,95.5 L3637.5,110 Z" fill="#22252b"/></svg><div style="position:absolute;left:3512.5px;top:124px;font:24.4px 'Liberation Sans', sans-serif;color:#ccccdc;white-space:nowrap;line-height:30px">Refresh dashboard</div>
<svg style="position:absolute;left:0;top:1918px" width="32" height="30" viewBox="0 1918 32 30"><path d="M0,1928 Q2,1946 20,1948 L0,1948 Z" fill="#06161a"/><path d="M1.2,1918 L1.2,1928 Q2.5,1946.5 20,1947.5" fill="none" stroke="#4a4d52" stroke-width="2"/></svg>
<svg style="position:absolute;left:3806px;top:1918px" width="30" height="30" viewBox="3806 1918 30 30"><path d="M3836,1934 Q3834,1946 3820,1948 L3836,1948 Z" fill="#06080a"/><path d="M3836,1934 Q3834,1946.5 3820,1947.5" fill="none" stroke="#4a4d52" stroke-width="1.5"/></svg>
</body></html>
